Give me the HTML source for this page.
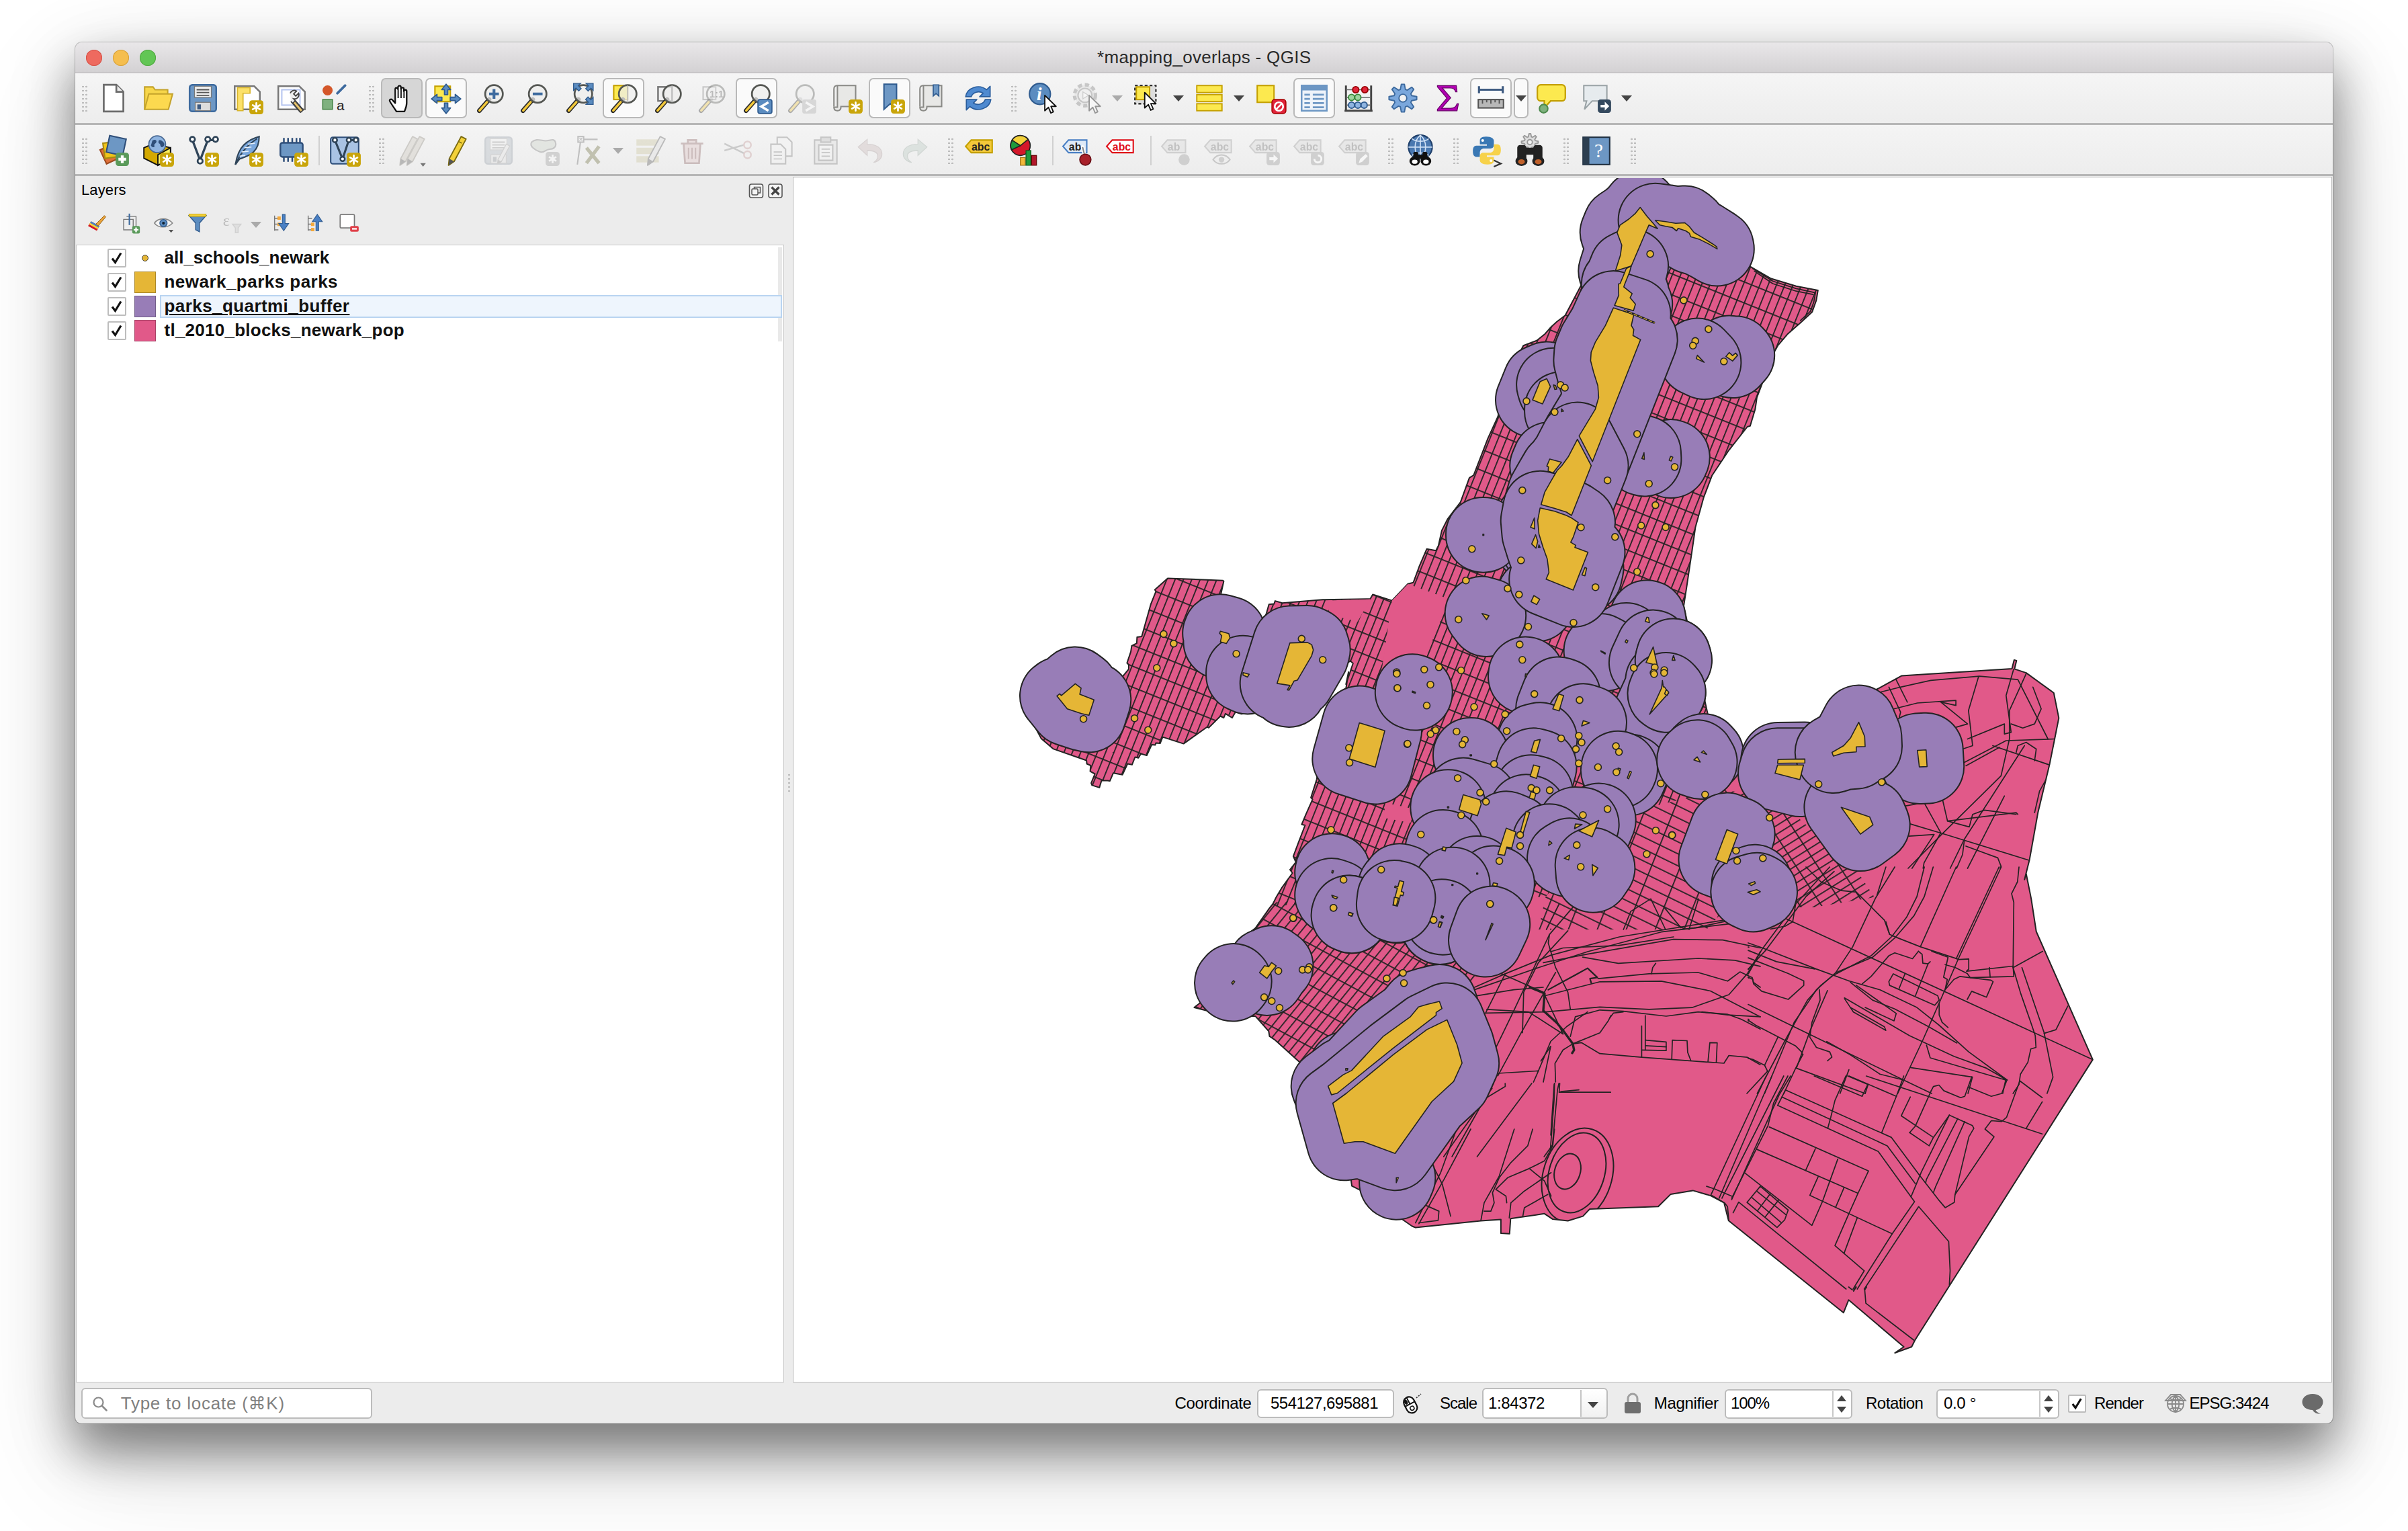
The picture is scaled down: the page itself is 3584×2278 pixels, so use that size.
<!DOCTYPE html><html><head><meta charset="utf-8"><title>mapping_overlaps - QGIS</title><style>
html,body{margin:0;padding:0;background:#fff}
body{width:3584px;height:2278px;position:relative;overflow:hidden;font-family:"Liberation Sans",sans-serif}
#win{position:absolute;left:112px;top:63px;width:3360px;height:2055px;background:#ececec;border-radius:10px 10px 9px 9px;
 box-shadow:0 0 0 1px rgba(0,0,0,.22),0 40px 66px rgba(0,0,0,.33),0 34px 100px rgba(0,0,0,.23),0 60px 170px rgba(0,0,0,.13);}
#in{position:absolute;left:-112px;top:-63px;width:3584px;height:2278px;}
#clip{position:absolute;left:0;top:0;width:3360px;height:2055px;border-radius:10px 10px 9px 9px;overflow:hidden}
.abs{position:absolute}
.t{position:absolute;white-space:nowrap}
.ic{position:absolute;overflow:visible}
.btn{position:absolute;border:2px solid #b9b9b9;border-radius:7px;background:#fafafa;box-sizing:border-box}
.hd{position:absolute;width:10px;height:40px;background-image:radial-gradient(circle,#bdbdbd 1.2px,transparent 1.6px);background-size:5px 6px}
.box{position:absolute;background:#fff;border:2px solid #bcbcbc;border-radius:6px;box-sizing:border-box}
.map{position:absolute;left:1182px;top:265px}
.sep{position:absolute;width:2px;height:44px;background:#d0d0d0}
.arr{position:absolute;width:0;height:0;border-left:8px solid transparent;border-right:8px solid transparent;border-top:9px solid #555}
</style></head><body><div id="win"><div id="clip"><div id="in">
<div class="abs" style="left:112px;top:63px;width:3360px;height:45px;background:linear-gradient(#e9e7e9,#d3d1d3);border-bottom:1px solid #b4b2b4"></div>
<div class="abs" style="left:127.80000000000001px;top:74px;width:24px;height:24px;border-radius:50%;background:#ee6a5f;box-shadow:inset 0 0 0 1px #d5544a"></div>
<div class="abs" style="left:167.9px;top:74px;width:24px;height:24px;border-radius:50%;background:#f5be4f;box-shadow:inset 0 0 0 1px #d6a13d"></div>
<div class="abs" style="left:208px;top:74px;width:24px;height:24px;border-radius:50%;background:#62c655;box-shadow:inset 0 0 0 1px #52a842"></div>
<div class="t" style="left:1633px;top:70.4px;font-size:26px;line-height:31.2px;letter-spacing:0.32px;color:#2a2a2a;">*mapping_overlaps - QGIS</div>
<div class="abs" style="left:112px;top:109px;width:3360px;height:74px;background:linear-gradient(#f5f5f5,#ededed);border-bottom:3px solid #b6b6b6"></div>
<div class="abs" style="left:112px;top:186px;width:3360px;height:73px;background:linear-gradient(#f4f4f4,#ededed);border-bottom:3px solid #b6b6b6"></div>
<div class="hd" style="left:121px;top:126px"></div>
<div class="hd" style="left:548px;top:126px"></div>
<div class="hd" style="left:1504px;top:126px"></div>
<div class="hd" style="left:121px;top:204px"></div>
<div class="hd" style="left:563px;top:204px"></div>
<div class="hd" style="left:1410px;top:204px"></div>
<div class="hd" style="left:2065px;top:204px"></div>
<div class="hd" style="left:2162px;top:204px"></div>
<div class="hd" style="left:2326px;top:204px"></div>
<div class="hd" style="left:2426px;top:204px"></div>
<div class="btn" style="left:567.0px;top:116.0px;width:62px;height:60px;background:#d6d6d6"></div>
<div class="btn" style="left:633.0px;top:116.0px;width:62px;height:60px;background:#fafafa"></div>
<div class="btn" style="left:896.5px;top:116.0px;width:62px;height:60px;background:#fafafa"></div>
<div class="btn" style="left:1094.5px;top:116.0px;width:62px;height:60px;background:#fafafa"></div>
<div class="btn" style="left:1293.0px;top:116.0px;width:62px;height:60px;background:#fafafa"></div>
<div class="btn" style="left:1924.5px;top:116.0px;width:62px;height:60px;background:#fafafa"></div>
<div class="btn" style="left:2188.0px;top:116.0px;width:62px;height:60px;background:#fafafa"></div>
<div class="btn" style="left:2253.0px;top:116.0px;width:22px;height:60px;background:#fafafa"></div>
<svg class="ic" style="left:144px;top:121px" width="50" height="50" viewBox="0 0 24 24"><path d="M5 2.5h9l5 5v14H5z" fill="#fff" stroke="#6b6b6b" stroke-width="1.3"/><path d="M14 2.5v5h5" fill="#eee" stroke="#6b6b6b" stroke-width="1.3"/></svg>
<svg class="ic" style="left:210px;top:121px" width="50" height="50" viewBox="0 0 24 24"><path d="M2.5 20V4h6l1.5 2h9v3" fill="#f7d64a" stroke="#c4a32b" stroke-width="1"/><path d="M2.5 20l3-11h17l-3 11z" fill="#fcd94f" stroke="#c4a32b" stroke-width="1"/></svg>
<svg class="ic" style="left:277px;top:121px" width="50" height="50" viewBox="0 0 24 24"><rect x="2.5" y="2.5" width="19" height="19" rx="2" fill="#6d97c4" stroke="#3d6a9e" stroke-width="1.2"/><rect x="6" y="3.5" width="12" height="8" fill="#eee" stroke="#777" stroke-width=".6"/><path d="M7.5 6h9M7.5 8h9M7.5 10h9" stroke="#555" stroke-width=".9"/><rect x="6.5" y="15" width="11" height="6" fill="#ddd" stroke="#777" stroke-width=".6"/><rect x="8" y="16.5" width="2.6" height="3.5" fill="#3d5a80"/></svg>
<svg class="ic" style="left:343px;top:121px" width="50" height="50" viewBox="0 0 24 24"><path d="M3 3.5h14l4 4V20H3z" fill="#fff" stroke="#777" stroke-width="1.2"/><path d="M5 4.5h9v4h-5v12.5H5z" fill="#fce16a" stroke="#d8b52c" stroke-width=".8"/><rect x="13.5" y="13.5" width="10" height="10" rx="2" fill="#c9a50a"/><g stroke="#fff" stroke-width="1.3" stroke-linecap="round"><path d="M18.5 15.5v6M15.9 17.0l5.2 3M21.1 17.0l-5.2 3"/></g></svg>
<svg class="ic" style="left:408.5px;top:121px" width="50" height="50" viewBox="0 0 24 24"><path d="M2.5 3.5h15l4 4V20h-19z" fill="#fff" stroke="#777" stroke-width="1.2"/><rect x="5" y="6" width="13" height="11" fill="none" stroke="#b7c6f0" stroke-width="1"/><path d="M11 8.5a3 3 0 0 1 4.5-1.5l-2 2 1.5 1.5 2-2a3 3 0 0 1-3.5 4l6.5 7.5-2 1.8-6.5-7.5" fill="#eee" stroke="#444" stroke-width=".9"/><path d="M14.5 14l5.7 6.6-1.7 1.5-5.6-6.6z" fill="#e9c46a" stroke="#444" stroke-width=".8"/></svg>
<svg class="ic" style="left:473px;top:121px" width="50" height="50" viewBox="0 0 24 24"><circle cx="7" cy="6.5" r="3.6" fill="#d4572a"/><rect x="3.5" y="13" width="7" height="7" fill="#7fb17f" stroke="#4e8a4e" stroke-width=".8"/><path d="M14 8.5l5.5-5.5" stroke="#3d6a9e" stroke-width="1.8" stroke-linecap="round"/><text x="13.5" y="20.5" font-family="Liberation Sans,sans-serif" font-size="10" fill="#222">a</text></svg>
<svg class="ic" style="left:573px;top:121px" width="50" height="50" viewBox="0 0 24 24"><path d="M8.2 21.5c-1.3-2-3.6-5.3-4.6-7-.8-1.4.6-2.3 1.7-1.2l2 2.3V5.8c0-1.5 2-1.5 2 0V4.3c0-1.5 2.1-1.5 2.1 0v1.2c0-1.4 2.1-1.4 2.1 0v1.6c0-1.3 2-1.3 2 0v8.4c0 2.4-.8 4-1.6 6z" fill="#fff" stroke="#111" stroke-width="1.1" stroke-linejoin="round"/><path d="M9.4 6v6M11.5 5.5V12M13.6 6.5V12" stroke="#111" stroke-width=".9"/></svg>
<svg class="ic" style="left:639px;top:121px" width="50" height="50" viewBox="0 0 24 24"><rect x="4" y="3.5" width="11" height="11" fill="#fce94f" stroke="#c4a000" stroke-width="1"/><g fill="#5b8cc0" stroke="#2f5b8f" stroke-width=".8" stroke-linejoin="round"><path d="M12 2l3.2 4h-2v3.5h-2.4V6h-2z"/><path d="M12 23l3.2-4h-2v-3.5h-2.4V19h-2z"/><path d="M1.5 12.5l4-3.2v2H9v2.4H5.5v2z"/><path d="M22.5 12.5l-4-3.2v2H15v2.4h3.5v2z"/></g></svg>
<svg class="ic" style="left:704px;top:121px" width="50" height="50" viewBox="0 0 24 24"><g opacity="1"><path d="M4.5 21 L11.5 13" stroke="#2b2b2b" stroke-width="3.2" stroke-linecap="round"/><path d="M4.7 20.8 L10 14.8" stroke="#f3c93a" stroke-width="1.7" stroke-linecap="round"/><circle cx="15" cy="9" r="6.3" fill="#eeeeec" fill-opacity=".75" stroke="#555753" stroke-width="1.3"/><path d="M15 5.5v7M11.5 9h7" stroke="#3d6a9e" stroke-width="2"/></g></svg>
<svg class="ic" style="left:769px;top:121px" width="50" height="50" viewBox="0 0 24 24"><g opacity="1"><path d="M4.5 21 L11.5 13" stroke="#2b2b2b" stroke-width="3.2" stroke-linecap="round"/><path d="M4.7 20.8 L10 14.8" stroke="#f3c93a" stroke-width="1.7" stroke-linecap="round"/><circle cx="15" cy="9" r="6.3" fill="#eeeeec" fill-opacity=".75" stroke="#555753" stroke-width="1.3"/><path d="M11.5 9h7" stroke="#3d6a9e" stroke-width="2"/></g></svg>
<svg class="ic" style="left:837px;top:121px" width="50" height="50" viewBox="0 0 24 24"><g opacity="1"><path d="M4.5 21 L11.5 13" stroke="#2b2b2b" stroke-width="3.2" stroke-linecap="round"/><path d="M4.7 20.8 L10 14.8" stroke="#f3c93a" stroke-width="1.7" stroke-linecap="round"/><circle cx="15" cy="9" r="6.3" fill="#eeeeec" fill-opacity=".75" stroke="#555753" stroke-width="1.3"/></g><g fill="#5b8cc0" stroke="#2f5b8f" stroke-width=".7"><path d="M8 1.5h5l-1.6 1.6 2 2-1.7 1.7-2-2L8 6.5z"/><path d="M22 1.5v5l-1.6-1.6-2 2-1.7-1.7 2-2L17 1.5z"/><path d="M22 16.5h-5l1.6-1.6-2-2 1.7-1.7 2 2 1.7-1.7z"/></g></svg>
<svg class="ic" style="left:902.5px;top:121px" width="50" height="50" viewBox="0 0 24 24"><rect x="5" y="3" width="10" height="10" fill="#fce94f" stroke="#c4a000" stroke-width="1"/><g opacity="1"><path d="M4.5 21 L11.5 13" stroke="#2b2b2b" stroke-width="3.2" stroke-linecap="round"/><path d="M4.7 20.8 L10 14.8" stroke="#f3c93a" stroke-width="1.7" stroke-linecap="round"/><circle cx="15" cy="9" r="6.3" fill="#eeeeec" fill-opacity=".75" stroke="#555753" stroke-width="1.3"/><path d="M15 3v12" stroke="#bbb" stroke-width=".8"/></g></svg>
<svg class="ic" style="left:968.5px;top:121px" width="50" height="50" viewBox="0 0 24 24"><rect x="5" y="4" width="10" height="10" fill="#f0f0f0" stroke="#777" stroke-width="1.2"/><g opacity="1"><path d="M4.5 21 L11.5 13" stroke="#2b2b2b" stroke-width="3.2" stroke-linecap="round"/><path d="M4.7 20.8 L10 14.8" stroke="#f3c93a" stroke-width="1.7" stroke-linecap="round"/><circle cx="15" cy="9" r="6.3" fill="#eeeeec" fill-opacity=".75" stroke="#555753" stroke-width="1.3"/><path d="M15 3v12" stroke="#bbb" stroke-width=".8"/></g></svg>
<svg class="ic" style="left:1034px;top:121px" width="50" height="50" viewBox="0 0 24 24"><g opacity=".35"><rect x="6" y="4" width="9" height="9" fill="#f0f0f0" stroke="#777"/></g><g opacity="0.35"><path d="M4.5 21 L11.5 13" stroke="#2b2b2b" stroke-width="3.2" stroke-linecap="round"/><path d="M4.7 20.8 L10 14.8" stroke="#f3c93a" stroke-width="1.7" stroke-linecap="round"/><circle cx="15" cy="9" r="6.3" fill="#eeeeec" fill-opacity=".75" stroke="#555753" stroke-width="1.3"/><text x="10.6" y="11.5" font-family="Liberation Sans,sans-serif" font-weight="bold" font-size="7" fill="#555">1:1</text></g></svg>
<svg class="ic" style="left:1100.5px;top:121px" width="50" height="50" viewBox="0 0 24 24"><g opacity="1"><path d="M4.5 21 L11.5 13" stroke="#2b2b2b" stroke-width="3.2" stroke-linecap="round"/><path d="M4.7 20.8 L10 14.8" stroke="#f3c93a" stroke-width="1.7" stroke-linecap="round"/><circle cx="15" cy="9" r="6.3" fill="#eeeeec" fill-opacity=".75" stroke="#555753" stroke-width="1.3"/></g><rect x="13" y="13" width="10" height="10" rx="1.5" fill="#5b8cc0" stroke="#2f5b8f" stroke-width=".8"/><path d="M20.5 15l-5 3 5 3" fill="none" stroke="#fff" stroke-width="1.8"/></svg>
<svg class="ic" style="left:1167px;top:121px" width="50" height="50" viewBox="0 0 24 24"><g opacity=".35"><g opacity="1"><path d="M4.5 21 L11.5 13" stroke="#2b2b2b" stroke-width="3.2" stroke-linecap="round"/><path d="M4.7 20.8 L10 14.8" stroke="#f3c93a" stroke-width="1.7" stroke-linecap="round"/><circle cx="15" cy="9" r="6.3" fill="#eeeeec" fill-opacity=".75" stroke="#555753" stroke-width="1.3"/></g><rect x="13" y="13" width="10" height="10" rx="1.5" fill="#aaa"/><path d="M15.5 15l5 3-5 3" fill="none" stroke="#fff" stroke-width="1.8"/></g></svg>
<svg class="ic" style="left:1235.5px;top:121px" width="50" height="50" viewBox="0 0 24 24"><path d="M5 3h13v15H7.5c0 2-1 3-2.5 3s-2.5-1-2.500-2.500h2.500z" fill="#e8e8e6" stroke="#8a8a86" stroke-width="1"/><path d="M5 3c-1.500 0-2.500 1-2.500 2.500V18" fill="none" stroke="#8a8a86"/><rect x="13" y="13" width="10" height="10" rx="2" fill="#c9a50a"/><g stroke="#fff" stroke-width="1.3" stroke-linecap="round"><path d="M18 15v6M15.4 16.5l5.2 3M20.6 16.5l-5.2 3"/></g></svg>
<svg class="ic" style="left:1299px;top:121px" width="50" height="50" viewBox="0 0 24 24"><path d="M8 2h9v18l-4.500-4-4.500 4z" fill="#6d97c4" stroke="#2f5b8f" stroke-width="1"/><rect x="13" y="13" width="10" height="10" rx="2" fill="#c9a50a"/><g stroke="#fff" stroke-width="1.3" stroke-linecap="round"><path d="M18 15v6M15.4 16.5l5.2 3M20.6 16.5l-5.2 3"/></g></svg>
<svg class="ic" style="left:1364px;top:121px" width="50" height="50" viewBox="0 0 24 24"><path d="M5 3h13v15H7.5c0 2-1 3-2.5 3s-2.5-1-2.500-2.500h2.500z" fill="#e8e8e6" stroke="#8a8a86" stroke-width="1"/><path d="M5 3c-1.500 0-2.500 1-2.500 2.500V18" fill="none" stroke="#8a8a86"/><path d="M12 2.5h4v8l-2-1.800-2 1.800z" fill="#6d97c4" stroke="#2f5b8f" stroke-width=".8"/></svg>
<svg class="ic" style="left:1430.7px;top:121px" width="50" height="50" viewBox="0 0 24 24"><g fill="#4f8ad0" stroke="#2a5d9c" stroke-width=".8" stroke-linejoin="round"><path d="M3 11a9 8 0 0 1 15-5l2.500-2.500V11h-7.500l2.500-2.500a5.500 5 0 0 0-8.500 2.500z"/><path d="M21 13a9 8 0 0 1-15 5l-2.500 2.500V13H11l-2.500 2.500a5.500 5 0 0 0 8.500-2.500z"/></g></svg>
<svg class="ic" style="left:1527.7px;top:121px" width="50" height="50" viewBox="0 0 24 24"><circle cx="9.500" cy="9" r="7.500" fill="#5b8cc0" stroke="#2f5b8f"/><text x="7.200" y="13.500" font-family="Liberation Serif,serif" font-style="italic" font-weight="bold" font-size="13" fill="#fff">i</text><path d="M13 10v11l2.600-2.400 1.700 4 1.800-.8-1.700-3.900h3.600z" fill="#fff" stroke="#111" stroke-width=".9" stroke-linejoin="round"/></svg>
<svg class="ic" style="left:1594px;top:121px" width="50" height="50" viewBox="0 0 24 24"><g opacity=".4"><circle cx="10" cy="10" r="7.500" fill="#ddd" stroke="#888" stroke-width="2.500" stroke-dasharray="3 2"/><circle cx="10" cy="10" r="5" fill="#eee" stroke="#888"/><path d="M8.500 7.500v5l4-2.500z" fill="#fff" stroke="#999" stroke-width=".6"/><path d="M13 10v11l2.600-2.400 1.700 4 1.800-.8-1.700-3.900h3.600z" fill="#fff" stroke="#111" stroke-width=".9" stroke-linejoin="round"/></g></svg>
<svg class="ic" style="left:1684.7px;top:121px" width="50" height="50" viewBox="0 0 24 24"><rect x="2" y="3" width="15" height="13" fill="#ddd" stroke="#222" stroke-width="1" stroke-dasharray="2 1.500"/><rect x="3" y="4" width="9.500" height="9" fill="#fce94f" stroke="#c4a000"/><path d="M9 8v11l2.600-2.400 1.700 4 1.800-.8-1.700-3.900h3.600z" fill="#fff" stroke="#111" stroke-width=".9" stroke-linejoin="round"/></svg>
<svg class="ic" style="left:1774.8px;top:121px" width="50" height="50" viewBox="0 0 24 24"><g fill="#fce94f" stroke="#c4a000" stroke-width=".9"><rect x="3" y="3" width="18" height="5"/><rect x="3" y="9.500" width="18" height="5"/><rect x="3" y="16" width="18" height="5"/></g></svg>
<svg class="ic" style="left:1866px;top:121px" width="50" height="50" viewBox="0 0 24 24"><rect x="2.500" y="3" width="12" height="12" fill="#fce94f" stroke="#c4a000"/><rect x="13" y="13" width="10" height="10" rx="2" fill="#e0243a" stroke="#a40000" stroke-width=".7"/><circle cx="18" cy="18" r="3" fill="none" stroke="#fff" stroke-width="1.300"/><path d="M16 20l4-4" stroke="#fff" stroke-width="1.300"/></svg>
<svg class="ic" style="left:1930.5px;top:121px" width="50" height="50" viewBox="0 0 24 24"><rect x="3" y="3" width="18" height="18" fill="#eef3fa" stroke="#6d97c4" stroke-width="1.200"/><rect x="3" y="3" width="18" height="3.500" fill="#6d97c4"/><g stroke="#6d97c4" stroke-width="1.300"><path d="M5 9.500h4M11 9.500h8M5 12.500h4M11 12.500h8M5 15.500h4M11 15.500h8M5 18.500h4M11 18.500h8"/></g></svg>
<svg class="ic" style="left:1997px;top:121px" width="50" height="50" viewBox="0 0 24 24"><path d="M3 3v18M21 3v18M2 21h20" stroke="#444" stroke-width="1.400"/><path d="M3 6h18M3 11.500h18M3 17h18" stroke="#666" stroke-width=".8"/><g stroke-width=".9"><circle cx="10" cy="6" r="2.200" fill="#e0243a" stroke="#900"/><circle cx="16.500" cy="6" r="2.200" fill="#e0243a" stroke="#900"/><circle cx="7" cy="11.500" r="2.200" fill="#9fd39f" stroke="#3c8a3c"/><circle cx="11.500" cy="11.500" r="2.200" fill="#9fd39f" stroke="#3c8a3c"/><circle cx="7" cy="17" r="2.200" fill="#8fb4e0" stroke="#2f5b8f"/><circle cx="11.500" cy="17" r="2.200" fill="#8fb4e0" stroke="#2f5b8f"/><circle cx="16" cy="17" r="2.200" fill="#8fb4e0" stroke="#2f5b8f"/></g></svg>
<svg class="ic" style="left:2062.6px;top:121px" width="50" height="50" viewBox="0 0 24 24"><path d="M21.9 10.9 L21.9 13.1 L18.2 13.8 L17.7 15.1 L19.8 18.3 L18.3 19.8 L15.1 17.7 L13.8 18.2 L13.1 21.9 L10.9 21.9 L10.2 18.2 L8.9 17.7 L5.7 19.8 L4.2 18.3 L6.3 15.1 L5.8 13.8 L2.1 13.1 L2.1 10.9 L5.8 10.2 L6.3 8.9 L4.2 5.7 L5.7 4.2 L8.9 6.3 L10.2 5.8 L10.9 2.1 L13.1 2.1 L13.8 5.8 L15.1 6.3 L18.3 4.2 L19.8 5.7 L17.7 8.9 L18.2 10.2Z" fill="#7aa7dc" stroke="#3d6a9e" stroke-width=".9" stroke-linejoin="round"/><circle cx="12" cy="12" r="2.8" fill="#f2f2f2" stroke="#3d6a9e" stroke-width=".9"/></svg>
<svg class="ic" style="left:2128.6px;top:121px" width="50" height="50" viewBox="0 0 24 24"><path d="M5 3h13.500l.5 4.500h-1c-.5-2-1.500-2.800-4-2.800H8.500l6 7-6.500 7.500h6.500c2.500 0 3.800-1 4.500-3.200h1l-1 5H5v-1l6.800-8L5 4z" fill="#b100b1" stroke="#6a006a" stroke-width=".6"/></svg>
<svg class="ic" style="left:2194px;top:121px" width="50" height="50" viewBox="0 0 24 24"><path d="M3.500 6h17M3.500 3.500v5M20.500 3.500v5" stroke="#3d5a80" stroke-width="1.500"/><rect x="3" y="13" width="18" height="6" fill="#b8b8b8" stroke="#555" stroke-width="1"/><path d="M6 13v3M9 13v2M12 13v3M15 13v2M18 13v3" stroke="#555" stroke-width=".9"/></svg>
<svg class="ic" style="left:2284.7px;top:121px" width="50" height="50" viewBox="0 0 24 24"><path d="M4 2.500h15a2.500 2.500 0 0 1 2.500 2.500v6.500a2.500 2.500 0 0 1-2.500 2.500h-8l-4.500 5v-5H4a2.500 2.500 0 0 1-2.500-2.500V5A2.500 2.500 0 0 1 4 2.500z" fill="#fce94f" stroke="#c4a000" stroke-width="1.100"/><circle cx="6" cy="19.500" r="3" fill="#7fb17f" stroke="#4e8a4e"/></svg>
<svg class="ic" style="left:2350.8px;top:121px" width="50" height="50" viewBox="0 0 24 24"><path d="M3 3h16.500v11H9l-5.500 6 1.500-6H3z" fill="#e6ebee" stroke="#9aa3a6" stroke-width="1"/><rect x="13" y="13" width="9.500" height="9.500" rx="2" fill="#34495e"/><path d="M15 17.800h3v-2.300l3.200 3.200-3.200 3.200v-2.300h-3z" fill="#fff" transform="translate(0 -1)"/></svg>
<div class="arr" style="left:1654.7px;top:142px;border-top-color:#aaa"></div>
<div class="arr" style="left:1746px;top:142px;border-top-color:#444"></div>
<div class="arr" style="left:1836px;top:142px;border-top-color:#444"></div>
<div class="arr" style="left:2256px;top:142px;border-top-color:#444"></div>
<div class="arr" style="left:2412.6px;top:142px;border-top-color:#444"></div>
<svg class="ic" style="left:144px;top:199px" width="50" height="50" viewBox="0 0 24 24"><rect x="4" y="9" width="11" height="11" fill="#e0703a" stroke="#9c4a1f" transform="rotate(-25 9 14)"/><rect x="5" y="6" width="11" height="11" fill="#f0c419" stroke="#a88a10" transform="rotate(-8 10 11)"/><rect x="8" y="2.500" width="12" height="12" fill="#6d97c4" stroke="#2f4f7a" transform="rotate(12 14 8)"/><rect x="13.500" y="13.500" width="9.500" height="9.500" rx="2" fill="#5a9a5a"/><path d="M18.200 15.500v5.500M15.500 18.200h5.500" stroke="#fff" stroke-width="2"/></svg>
<svg class="ic" style="left:210px;top:199px" width="50" height="50" viewBox="0 0 24 24"><path d="M2 10l7-3 12 3v8l-9 4.500-10-5z" fill="#d4a900" stroke="#111" stroke-width=".9" stroke-linejoin="round"/><path d="M12 15l9-5v8l-9 4.500z" fill="#fcf060" stroke="#111" stroke-width=".9"/><circle cx="11.500" cy="7.500" r="6" fill="#8fb4e0" stroke="#4a6a94" stroke-width=".8"/><path d="M8 5c1-1 3-1 3 .5s-2 1.500-1.500 3S8 10 7 8.500zM13 4.500c1.500 0 3 1 3.500 2.500s-1 3-2 2.500-.5-2-1.500-2.500-.5-2.500 0-2.500z" fill="#2f4f7a"/><rect x="13.5" y="13.5" width="10" height="10" rx="2" fill="#c9a50a"/><g stroke="#fff" stroke-width="1.3" stroke-linecap="round"><path d="M18.5 15.5v6M15.9 17.0l5.2 3M21.1 17.0l-5.2 3"/></g></svg>
<svg class="ic" style="left:277px;top:199px" width="50" height="50" viewBox="0 0 24 24"><path d="M4.500 4.500L10 19 15.500 4.500H21" fill="none" stroke="#2f4458" stroke-width="1.600"/><g fill="#fff" stroke="#2f4458" stroke-width="1.300"><circle cx="4.500" cy="4" r="1.800"/><circle cx="15.500" cy="4" r="1.800"/><circle cx="21" cy="4" r="1.800"/><circle cx="10" cy="19.500" r="1.800"/></g><rect x="13.5" y="13.5" width="10" height="10" rx="2" fill="#c9a50a"/><g stroke="#fff" stroke-width="1.3" stroke-linecap="round"><path d="M18.5 15.5v6M15.9 17.0l5.2 3M21.1 17.0l-5.2 3"/></g></svg>
<svg class="ic" style="left:343px;top:199px" width="50" height="50" viewBox="0 0 24 24"><path d="M3.500 22c1-6 3-11 6-14s7-5 11-6c0 4-1 8-4 11s-7 4-10 5z" fill="#7aa7dc" stroke="#2f4458" stroke-width="1"/><path d="M3.500 22C7 14 12 8 19 3.500" fill="none" stroke="#2f4458" stroke-width="1"/><path d="M8 13l5-.5M10 10l5-.5M12.500 7.500l5-.8M6.500 16l4-.5" stroke="#e8f0fa" stroke-width=".8"/><rect x="13.5" y="13.5" width="10" height="10" rx="2" fill="#c9a50a"/><g stroke="#fff" stroke-width="1.3" stroke-linecap="round"><path d="M18.5 15.5v6M15.9 17.0l5.2 3M21.1 17.0l-5.2 3"/></g></svg>
<svg class="ic" style="left:409.5px;top:199px" width="50" height="50" viewBox="0 0 24 24"><rect x="3.500" y="6.500" width="16" height="10" rx="1.500" fill="#6d97c4" stroke="#2f4f7a" stroke-width="1.200"/><path d="M6 3v3.500M9 3v3.500M12 3v3.500M15 3v3.500M17.500 3v3.500M6 16.500V20M9 16.500V20M12 16.500V20M15 16.500V20" stroke="#2f4f7a" stroke-width="1.200"/><rect x="13.5" y="13.5" width="10" height="10" rx="2" fill="#c9a50a"/><g stroke="#fff" stroke-width="1.3" stroke-linecap="round"><path d="M18.5 15.5v6M15.9 17.0l5.2 3M21.1 17.0l-5.2 3"/></g></svg>
<svg class="ic" style="left:488px;top:199px" width="50" height="50" viewBox="0 0 24 24"><rect x="2" y="2.500" width="20" height="19" rx="1.500" fill="#a9c3e4" stroke="#2f4f7a" stroke-width="1"/><path d="M5 4.500L10.500 18 15 4.500H20" fill="none" stroke="#2f4458" stroke-width="1.500"/><g fill="#fff" stroke="#2f4458" stroke-width="1.200"><circle cx="5" cy="4.500" r="1.600"/><circle cx="15" cy="4.500" r="1.600"/><circle cx="20" cy="4.500" r="1.600"/><circle cx="10.500" cy="18" r="1.600"/></g><rect x="13.5" y="13.5" width="10" height="10" rx="2" fill="#c9a50a"/><g stroke="#fff" stroke-width="1.3" stroke-linecap="round"><path d="M18.5 15.5v6M15.9 17.0l5.2 3M21.1 17.0l-5.2 3"/></g></svg>
<svg class="ic" style="left:587.7px;top:199px" width="50" height="50" viewBox="0 0 24 24"><g opacity=".35"><g transform="translate(-4 0)"><path d="M16.500 2l3.500 1.800-8.500 16-4 2.700.5-4.700z" fill="#c9c3b8" stroke="#8a857a" stroke-width=".9" stroke-linejoin="round"/><path d="M8 17.800l3.500 2-4 2.700z" fill="#555"/></g><g transform="translate(1 0)"><path d="M16.500 2l3.500 1.800-8.500 16-4 2.700.5-4.700z" fill="#c9c3b8" stroke="#8a857a" stroke-width=".9" stroke-linejoin="round"/><path d="M8 17.800l3.500 2-4 2.700z" fill="#555"/></g></g><path d="M18 21h4l-2 2.500z" fill="#777"/></svg>
<svg class="ic" style="left:652px;top:199px" width="50" height="50" viewBox="0 0 24 24"><g transform="translate(0 0)"><path d="M16.500 2l3.500 1.800-8.500 16-4 2.700.5-4.700z" fill="#f3d13a" stroke="#7a6a10" stroke-width=".9" stroke-linejoin="round"/><path d="M8 17.800l3.500 2-4 2.700z" fill="#555"/></g><path d="M14.500 5.500l2.500 1.300" stroke="#7a6a10" stroke-width=".7"/></svg>
<svg class="ic" style="left:717px;top:199px" width="50" height="50" viewBox="0 0 24 24"><g opacity=".22" style="filter:grayscale(.7)"><rect x="2.5" y="2.5" width="19" height="19" rx="2" fill="#6d97c4" stroke="#3d6a9e" stroke-width="1.2"/><rect x="6" y="3.5" width="12" height="8" fill="#eee" stroke="#777" stroke-width=".6"/><path d="M7.5 6h9M7.5 8h9M7.5 10h9" stroke="#555" stroke-width=".9"/><rect x="6.5" y="15" width="11" height="6" fill="#ddd" stroke="#777" stroke-width=".6"/><rect x="8" y="16.5" width="2.6" height="3.5" fill="#3d5a80"/><g transform="translate(6 6) scale(.7)"><path d="M16.500 2l3.500 1.800-8.500 16-4 2.700.5-4.700z" fill="#ddd" stroke="#666" stroke-width=".9" stroke-linejoin="round"/><path d="M8 17.800l3.500 2-4 2.700z" fill="#555"/></g></g></svg>
<svg class="ic" style="left:785px;top:199px" width="50" height="50" viewBox="0 0 24 24"><g opacity=".35"><path d="M3 6c3-3 7-1 10-1s6-2 7 1-1 5-4 5-4 3-7 2-8-4-6-7z" fill="#c9cfc4" stroke="#777"/><rect x="13" y="13" width="10" height="10" rx="2" fill="#999"/><g stroke="#fff" stroke-width="1.300"><path d="M18 15v6M15.400 16.500l5.200 3M20.600 16.500l-5.200 3"/></g></g></svg>
<svg class="ic" style="left:852px;top:199px" width="50" height="50" viewBox="0 0 24 24"><g opacity=".35"><path d="M6 4h12M6 4L3.500 22" stroke="#666" stroke-width="1"/><rect x="4" y="2" width="4" height="4" fill="#fff" stroke="#666"/><path d="M5 3l2 2M7 3L5 5" stroke="#666" stroke-width=".6"/><path d="M10 10l9 11M19 9l-9 12" stroke="#6b6b3a" stroke-width="2.500"/></g></svg>
<svg class="ic" style="left:942px;top:199px" width="50" height="50" viewBox="0 0 24 24"><g opacity=".35"><rect x="2.500" y="4" width="16" height="4.500" fill="#c9c39a"/><rect x="2.500" y="10" width="16" height="4.500" fill="#c9c39a"/><rect x="2.500" y="16" width="16" height="4.500" fill="#c9c39a"/><g transform="translate(3 0)"><path d="M16.500 2l3.500 1.800-8.500 16-4 2.700.5-4.700z" fill="#ddd" stroke="#555" stroke-width=".9" stroke-linejoin="round"/><path d="M8 17.800l3.500 2-4 2.700z" fill="#555"/></g></g></svg>
<svg class="ic" style="left:1005px;top:199px" width="50" height="50" viewBox="0 0 24 24"><g opacity=".3"><path d="M4 7h16M9 7V4.500h6V7M6 7l1 14h10l1-14" fill="#d9b8b8" stroke="#7a4a4a" stroke-width="1.300"/><path d="M9.500 10v8M12 10v8M14.500 10v8" stroke="#7a4a4a"/></g></svg>
<svg class="ic" style="left:1073.5px;top:199px" width="50" height="50" viewBox="0 0 24 24"><g opacity=".3" fill="none" stroke="#777" stroke-width="1.200"><path d="M2 7l14 7M2 12l14-4"/><circle cx="18.500" cy="8" r="2.500" stroke="#b88"/><circle cx="18.500" cy="15" r="2.500" stroke="#b88"/></g></svg>
<svg class="ic" style="left:1138px;top:199px" width="50" height="50" viewBox="0 0 24 24"><g opacity=".35" fill="#f4f4f4" stroke="#777" stroke-width="1"><path d="M9 2.500h7l3.500 3.500v10H9z"/><path d="M4.500 7.500h7l3.500 3.500v10.500H4.500z"/><path d="M6.500 13h6M6.500 15.500h6M6.500 18h6" stroke-width=".8"/></g></svg>
<svg class="ic" style="left:1204px;top:199px" width="50" height="50" viewBox="0 0 24 24"><g opacity=".35" fill="#f4f4f4" stroke="#777" stroke-width="1"><path d="M4 4.500h16v17H4z" fill="#ddd"/><rect x="8.500" y="2.500" width="7" height="3.500" fill="#bbb"/><path d="M7 8h10v11H7z"/><path d="M9 11h6M9 13.500h6M9 16h6" stroke-width=".8"/></g></svg>
<svg class="ic" style="left:1271px;top:199px" width="50" height="50" viewBox="0 0 24 24"><g opacity=".35"><path d="M3 9.500l6.500-5.500v3.500c7 0 10.500 3 10.500 7 0 3-2.500 5.500-6 6 2-1 3-2.500 3-4.500 0-2.500-2.500-4-7.500-4v3.500z" fill="#c9b8b8" stroke="#a89a9a" stroke-width=".6"/></g></svg>
<svg class="ic" style="left:1336.4px;top:199px" width="50" height="50" viewBox="0 0 24 24"><g opacity=".35" transform="translate(24 0) scale(-1 1)"><path d="M3 9.500l6.500-5.500v3.500c7 0 10.500 3 10.500 7 0 3-2.500 5.500-6 6 2-1 3-2.500 3-4.500 0-2.500-2.500-4-7.500-4v3.500z" fill="#b8c9c0" stroke="#9aa8a0" stroke-width=".6"/></g></svg>
<svg class="ic" style="left:1432px;top:199px" width="50" height="50" viewBox="0 0 24 24"><g opacity="1"><path d="M2.5 9 L6.5 4.5 H21.5 V13.5 H6.5 Z" fill="#f3c93a" stroke="#c4a000" stroke-width="1"/><text x="6.7" y="12" font-family="Liberation Sans,sans-serif" font-weight="bold" font-size="7.6" fill="#222">abc</text></g></svg>
<svg class="ic" style="left:1500px;top:199px" width="50" height="50" viewBox="0 0 24 24"><circle cx="9" cy="8.500" r="7" fill="#d4172a" stroke="#222" stroke-width=".8"/><path d="M9 8.500V1.500a7 7 0 0 0-6.300 10z" fill="#1f9a3c" stroke="#222" stroke-width=".8"/><path d="M9 8.500L3 4.500A7 7 0 0 1 14.500 4z" fill="#f3d13a" stroke="#222" stroke-width=".8"/><rect x="9" y="17" width="3.500" height="5.500" fill="#f3b93a" stroke="#a07010" stroke-width=".6"/><rect x="13" y="12" width="3.500" height="10.500" fill="#1f9a3c" stroke="#0f5a1c" stroke-width=".6"/><rect x="17" y="15.500" width="3.500" height="7" fill="#b0172a" stroke="#600" stroke-width=".6"/></svg>
<svg class="ic" style="left:1579.6px;top:199px" width="50" height="50" viewBox="0 0 24 24"><g opacity="1"><path d="M1 9 L5 4.5 H18 V13.5 H5 Z" fill="#dfeaf7" stroke="#4a80c4" stroke-width="1"/><text x="5.2" y="12" font-family="Liberation Sans,sans-serif" font-weight="bold" font-size="7.6" fill="#222">ab</text></g><path d="M15 9.500l1.500 6" stroke="#fff" stroke-width="2.500" stroke-linecap="round"/><path d="M15 9.500l1.500 6" stroke="#888" stroke-width="1" /><circle cx="17" cy="18.500" r="4" fill="#a8202a" stroke="#6a1018" stroke-width=".8"/></svg>
<svg class="ic" style="left:1644px;top:199px" width="50" height="50" viewBox="0 0 24 24"><g opacity="1"><path d="M1.5 9 L5.5 4.5 H20.5 V13.5 H5.5 Z" fill="#fff" stroke="#e0101a" stroke-width="1"/><text x="5.7" y="12" font-family="Liberation Sans,sans-serif" font-weight="bold" font-size="7.6" fill="#e0101a">abc</text></g></svg>
<svg class="ic" style="left:1727px;top:199px" width="50" height="50" viewBox="0 0 24 24"><g opacity=".45"><g opacity="1"><path d="M1 9 L5 4.5 H18 V13.5 H5 Z" fill="#ddd" stroke="#aaa" stroke-width="1"/><text x="5.2" y="12" font-family="Liberation Sans,sans-serif" font-weight="bold" font-size="7.6" fill="#888">ab</text></g><circle cx="17" cy="18.500" r="4" fill="#aaa"/></g></svg>
<svg class="ic" style="left:1791px;top:199px" width="50" height="50" viewBox="0 0 24 24"><g opacity=".45"><g opacity="1"><path d="M1 9 L5 4.5 H20 V13.5 H5 Z" fill="#ddd" stroke="#aaa" stroke-width="1"/><text x="5.2" y="12" font-family="Liberation Sans,sans-serif" font-weight="bold" font-size="7.6" fill="#888">abc</text></g><path d="M7 18.500c3-4.500 9-4.500 12 0-3 4-9 4-12 0z" fill="#eee" stroke="#999"/><circle cx="13" cy="18.500" r="2" fill="#aaa"/></g></svg>
<svg class="ic" style="left:1858px;top:199px" width="50" height="50" viewBox="0 0 24 24"><g opacity=".45"><g opacity="1"><path d="M1 9 L5 4.5 H20 V13.5 H5 Z" fill="#ddd" stroke="#aaa" stroke-width="1"/><text x="5.2" y="12" font-family="Liberation Sans,sans-serif" font-weight="bold" font-size="7.6" fill="#888">abc</text></g><rect x="13" y="13" width="9.500" height="9.500" rx="2" fill="#aaa"/><path d="M15 16.800h3v-2l3.200 3-3.200 3v-2h-3z" fill="#fff"/></g></svg>
<svg class="ic" style="left:1924px;top:199px" width="50" height="50" viewBox="0 0 24 24"><g opacity=".45"><g opacity="1"><path d="M1 9 L5 4.5 H20 V13.5 H5 Z" fill="#ddd" stroke="#aaa" stroke-width="1"/><text x="5.2" y="12" font-family="Liberation Sans,sans-serif" font-weight="bold" font-size="7.6" fill="#888">abc</text></g><rect x="13" y="13" width="9.500" height="9.500" rx="2" fill="#aaa"/><path d="M15.500 18a2.500 2.500 0 1 0 2.500-2.500" fill="none" stroke="#fff" stroke-width="1.400"/></g></svg>
<svg class="ic" style="left:1990.7px;top:199px" width="50" height="50" viewBox="0 0 24 24"><g opacity=".45"><g opacity="1"><path d="M1 9 L5 4.5 H20 V13.5 H5 Z" fill="#ddd" stroke="#aaa" stroke-width="1"/><text x="5.2" y="12" font-family="Liberation Sans,sans-serif" font-weight="bold" font-size="7.6" fill="#888">abc</text></g><rect x="13" y="13" width="9.500" height="9.500" rx="2" fill="#aaa"/><path d="M15 21l1-3 4-3.500 1.500 1.500-4 4z" fill="#fff"/></g></svg>
<svg class="ic" style="left:2089px;top:199px" width="50" height="50" viewBox="0 0 24 24"><circle cx="12" cy="9.500" r="8.500" fill="#4a78b0" stroke="#1f3f6a"/><path d="M3.500 9.500h17M12 1v17M6 3.500c3 2.500 9 2.500 12 0M6 15.500c3-2.500 9-2.500 12 0M12 1c-5 4-5 13 0 17M12 1c5 4 5 13 0 17" fill="none" stroke="#cfe0f5" stroke-width=".8"/><g fill="#111"><ellipse cx="8" cy="19.500" rx="3.800" ry="3.300"/><ellipse cx="16" cy="19.500" rx="3.800" ry="3.300"/><rect x="7" y="13" width="3.500" height="6" rx="1"/><rect x="13.500" y="13" width="3.500" height="6" rx="1"/><rect x="10" y="15" width="4" height="3"/></g><ellipse cx="8" cy="20" rx="2" ry="1.500" fill="#fff"/><ellipse cx="16" cy="20" rx="2" ry="1.500" fill="#fff"/></svg>
<svg class="ic" style="left:2188px;top:199px" width="50" height="50" viewBox="0 0 24 24"><path d="M11.500 2c-4 0-4.500 1.500-4.500 3v2.500h5v1H4.500C2.500 8.500 2 10.500 2 12.500s.5 4 2.500 4H7v-3c0-1.800 1.200-3 3-3h4.500c1.500 0 2.500-1 2.500-2.500V5c0-1.500-1.500-3-5.500-3z" fill="#3a78b4"/><circle cx="9" cy="4.800" r="1" fill="#fff"/><path d="M12.500 22c4 0 4.500-1.500 4.500-3v-2.500h-5v-1h7.500c2 0 2.500-2 2.500-4s-.5-4-2.500-4H17v3c0 1.800-1.200 3-3 3H9.500C8 13.500 7 14.500 7 16v3c0 1.500 1.500 3 5.500 3z" fill="#f7d24a"/><circle cx="15" cy="19.200" r="1" fill="#fff"/><path d="M17 19l5 2.300-5 2.200" fill="none" stroke="#333" stroke-width="1.100"/></svg>
<svg class="ic" style="left:2252px;top:199px" width="50" height="50" viewBox="0 0 24 24"><path d="M18.0 5.4 L18.0 6.6 L15.8 7.1 L15.5 7.9 L16.7 9.8 L15.8 10.7 L13.9 9.5 L13.1 9.8 L12.6 12.0 L11.4 12.0 L10.9 9.8 L10.1 9.5 L8.2 10.7 L7.3 9.8 L8.5 7.9 L8.2 7.1 L6.0 6.6 L6.0 5.4 L8.2 4.9 L8.5 4.1 L7.3 2.2 L8.2 1.3 L10.1 2.5 L10.9 2.2 L11.4 0.0 L12.6 0.0 L13.1 2.2 L13.9 2.5 L15.8 1.3 L16.7 2.2 L15.5 4.1 L15.8 4.9Z" fill="#ddd" stroke="#999" stroke-width=".9" stroke-linejoin="round"/><circle cx="12" cy="6" r="1.8" fill="#f2f2f2" stroke="#999" stroke-width=".9"/><g fill="#222"><rect x="3" y="8" width="6.500" height="11" rx="2"/><rect x="14.500" y="8" width="6.500" height="11" rx="2"/><rect x="9" y="10" width="6" height="5"/><ellipse cx="6" cy="19.500" rx="4.300" ry="3.500"/><ellipse cx="18" cy="19.500" rx="4.300" ry="3.500"/></g><ellipse cx="6" cy="20" rx="2.400" ry="1.800" fill="#c0602a"/><ellipse cx="18" cy="20" rx="2.400" ry="1.800" fill="#c0602a"/></svg>
<svg class="ic" style="left:2350.8px;top:199px" width="50" height="50" viewBox="0 0 24 24"><rect x="2.500" y="2.500" width="19" height="19.500" fill="#6d97c4" stroke="#1f2f40" stroke-width="1"/><rect x="2.500" y="2.500" width="4.500" height="19.500" fill="#2c3e50"/><text x="10.500" y="17" font-family="Liberation Serif,serif" font-size="14" fill="#fff">?</text></svg>
<div class="arr" style="left:912px;top:220px;border-top-color:#aaa"></div>
<div class="sep" style="left:474px;top:202px"></div>
<div class="sep" style="left:1566px;top:202px"></div>
<div class="sep" style="left:1712px;top:202px"></div>
<div class="t" style="left:121px;top:269.8px;font-size:22px;line-height:26.4px;letter-spacing:0.11px;color:#000;">Layers</div>
<svg class="ic" style="left:1114px;top:272px" width="52" height="24" viewBox="0 0 52 24"><rect x="1.500" y="2" width="20" height="20" rx="3" fill="#f4f4f4" stroke="#555" stroke-width="1.600"/><rect x="5" y="9" width="9" height="9" rx="1.500" fill="none" stroke="#555" stroke-width="1.500"/><path d="M8.500 9V6.500h9V15H14" fill="none" stroke="#555" stroke-width="1.500"/><rect x="30" y="2" width="20" height="20" rx="3" fill="#f4f4f4" stroke="#555" stroke-width="1.600"/><path d="M34.500 6.500l11 11M45.500 6.500l-11 11" stroke="#444" stroke-width="3.200"/></svg>
<svg class="ic" style="left:127px;top:315px" width="34" height="34" viewBox="0 0 24 24"><path d="M3 15l9 5 3-5-9-5z" fill="#e0703a"/><path d="M3 15l9 5 1-1.700-9-5z" fill="#d4172a"/><path d="M4 13.300l9 5 1-1.700-9-5z" fill="#f3d13a"/><path d="M5 11.600l9 5 1-1.600-9-5z" fill="#4a80c4"/><path d="M11 13l9-9 1.500 1.500-8 9.500z" fill="#e9a23a" stroke="#8a5a10" stroke-width=".6"/></svg>
<svg class="ic" style="left:177px;top:315px" width="34" height="34" viewBox="0 0 24 24"><path d="M5 8h10v11H5z" fill="#eee" stroke="#777"/><path d="M8 5h10v11" fill="none" stroke="#777"/><path d="M11 2v12" stroke="#3d6a9e" stroke-width="1.500"/><rect x="14" y="15" width="8" height="8" rx="1.500" fill="#5a9a5a"/><path d="M18 16.500v5M15.500 19h5" stroke="#fff" stroke-width="1.600"/></svg>
<svg class="ic" style="left:227px;top:315px" width="34" height="34" viewBox="0 0 24 24"><path d="M2 12c4-6 14-6 19 0-5 5.500-15 5.500-19 0z" fill="#f4f4f4" stroke="#888" stroke-width="1.100"/><circle cx="11.500" cy="12" r="3.800" fill="#5b8cc0" stroke="#2f5b8f"/><circle cx="11.500" cy="12" r="1.500" fill="#123"/><path d="M17 19h5l-2.500 3z" fill="#555"/></svg>
<svg class="ic" style="left:277px;top:315px" width="34" height="34" viewBox="0 0 24 24"><path d="M3 4h18l-7 8v9l-4-2v-7z" fill="#5b8cc0" stroke="#2f5b8f" stroke-width="1"/><rect x="3" y="2.500" width="18" height="2.500" fill="#f3d13a" stroke="#c4a000" stroke-width=".6"/></svg>
<svg class="ic" style="left:329px;top:315px" width="34" height="34" viewBox="0 0 24 24"><g opacity=".4"><text x="2" y="15" font-family="Liberation Serif,serif" font-size="17" fill="#777">ε</text><path d="M12 13h9l-3 4v5h-3v-5z" fill="#ccc" stroke="#aaa"/></g></svg>
<svg class="ic" style="left:403px;top:315px" width="34" height="34" viewBox="0 0 24 24"><path d="M4 4v16M4 7h4M4 13h4M4 19h4" stroke="#777" stroke-width="1"/><rect x="7" y="5" width="3.500" height="3.500" fill="#f3a83a"/><rect x="7" y="11.500" width="3.500" height="3.500" fill="#f3a83a"/><path d="M16 3v10h-4l5.500 8 5.500-8h-4V3z" fill="#4a80c4" stroke="#2f5b8f" stroke-width=".8" transform="translate(-3 0) scale(.95)"/></svg>
<svg class="ic" style="left:453px;top:315px" width="34" height="34" viewBox="0 0 24 24"><path d="M4 4v16M4 7h4M4 13h4M4 19h4" stroke="#777" stroke-width="1"/><rect x="7" y="11.500" width="3.500" height="3.500" fill="#f3a83a"/><rect x="7" y="17" width="3.500" height="3.500" fill="#f3a83a"/><path d="M16 21V11h-4l5.500-8 5.500 8h-4v10z" fill="#4a80c4" stroke="#2f5b8f" stroke-width=".8" transform="translate(-3 0) scale(.95)"/></svg>
<svg class="ic" style="left:502px;top:315px" width="34" height="34" viewBox="0 0 24 24"><rect x="3" y="3" width="15" height="14" rx="1" fill="#fff" stroke="#777" stroke-width="1.200"/><rect x="13.500" y="15" width="9" height="6" rx="1.500" fill="#e0404a"/><path d="M15.500 18h5" stroke="#fff" stroke-width="1.600"/></svg>
<div class="arr" style="left:373px;top:330px;border-top-color:#aaa"></div>
<div class="abs" style="left:113px;top:364px;width:1054px;height:1693px;background:#fff;border:1px solid #c6c6c6;box-sizing:border-box"></div>
<div class="abs" style="left:1158px;top:368px;width:6px;height:140px;background:#e9e9e9"></div>
<div class="abs" style="left:238px;top:439px;width:926px;height:34px;background:#eef5fd;border:2px solid #b9d4f1;box-sizing:border-box"></div>
<div class="abs" style="left:160px;top:369.6px;width:28px;height:28px;background:#fff;border:2px solid #bdbdbd;box-sizing:border-box;border-radius:2px"></div>
<svg class="ic" style="left:160px;top:369.6px" width="28" height="28" viewBox="0 0 28 28"><path d="M7 14.500l4.500 6L20 6.500" fill="none" stroke="#111" stroke-width="3.200"/></svg>
<div class="abs" style="left:211px;top:378.6px;width:10px;height:10px;border-radius:50%;background:#e5b636;border:1.500px solid #444;box-sizing:border-box"></div>
<div class="t" style="left:244.5px;top:368px;font-size:26px;line-height:31.2px;letter-spacing:0.00px;color:#111;font-weight:bold;">all_schools_newark</div>
<div class="abs" style="left:160px;top:405.6px;width:28px;height:28px;background:#fff;border:2px solid #bdbdbd;box-sizing:border-box;border-radius:2px"></div>
<svg class="ic" style="left:160px;top:405.6px" width="28" height="28" viewBox="0 0 28 28"><path d="M7 14.500l4.500 6L20 6.500" fill="none" stroke="#111" stroke-width="3.200"/></svg>
<div class="abs" style="left:200px;top:403.6px;width:32px;height:32px;background:#e5b636;box-shadow:inset 0 0 0 1px rgba(0,0,0,.25)"></div>
<div class="t" style="left:244.5px;top:404px;font-size:26px;line-height:31.2px;letter-spacing:0.47px;color:#111;font-weight:bold;">newark_parks parks</div>
<div class="abs" style="left:160px;top:441.8px;width:28px;height:28px;background:#fff;border:2px solid #bdbdbd;box-sizing:border-box;border-radius:2px"></div>
<svg class="ic" style="left:160px;top:441.8px" width="28" height="28" viewBox="0 0 28 28"><path d="M7 14.500l4.500 6L20 6.500" fill="none" stroke="#111" stroke-width="3.200"/></svg>
<div class="abs" style="left:200px;top:439.8px;width:32px;height:32px;background:#987db7;box-shadow:inset 0 0 0 1px rgba(0,0,0,.25)"></div>
<div class="t" style="left:244.5px;top:440.2px;font-size:26px;line-height:31.2px;letter-spacing:0.43px;color:#111;font-weight:bold;text-decoration:underline;text-decoration-thickness:2px;text-underline-offset:3px;">parks_quartmi_buffer</div>
<div class="abs" style="left:160px;top:477.7px;width:28px;height:28px;background:#fff;border:2px solid #bdbdbd;box-sizing:border-box;border-radius:2px"></div>
<svg class="ic" style="left:160px;top:477.7px" width="28" height="28" viewBox="0 0 28 28"><path d="M7 14.500l4.500 6L20 6.500" fill="none" stroke="#111" stroke-width="3.200"/></svg>
<div class="abs" style="left:200px;top:475.7px;width:32px;height:32px;background:#e15989;box-shadow:inset 0 0 0 1px rgba(0,0,0,.25)"></div>
<div class="t" style="left:244.5px;top:476.1px;font-size:26px;line-height:31.2px;letter-spacing:0.25px;color:#111;font-weight:bold;">tl_2010_blocks_newark_pop</div>
<div class="hd" style="left:1172px;top:1150px;width:5px;height:32px"></div>
<div class="abs" style="left:1180px;top:263px;width:2291px;height:1794px;background:#fff;border:1px solid #b9b9b9;box-sizing:border-box;overflow:hidden"></div>
<svg class="map" viewBox="1182 265 2288 1791" width="2288" height="1791">
<defs>
<clipPath id="cpk"><path d="M2449.2 289.9 L2603.7 395.8 L2636.1 414.5 L2673.4 425.7 L2705.8 431.9 L2703.3 446.9 L2697.1 464.3 L2680.9 479.3 L2661 496.7 L2646 514.2 L2638.5 527.9 L2621.1 575.2 L2614.9 591.4 L2612.4 608.8 L2604.9 633.8 L2600.7 635 L2573.3 669.8 L2548.3 707.2 L2535.9 739.6 L2523.4 784.5 L2518.4 819.3 L2511 869.2 L2506 901.6 L2542.3 1064.7 L2567.2 1109.5 L2594.6 1134.4 L2654.4 1109.5 L2716.7 1079.6 L2792.7 1026 L2830.1 1005.6 L2994.5 994.9 L2997.8 981.9 L3001.3 982.9 L2998.3 995.4 L3015.7 1001.1 L3056.8 1031 L3064.3 1068.4 L3058.1 1099.5 L3050.6 1136.9 L3033.2 1209.2 L3020.7 1278.9 L3013.2 1308.8 L3015.7 1300 L3023.2 1337.4 L3030.7 1386 L3114.8 1576.6 L2850.2 1994 L2845.2 2004 L2820.3 2013 L2833.6 2004 L2751.5 1934.2 L2743.9 1953.2 L2572.8 1816.3 L2566.1 1789.7 L2546.2 1779.1 L2519.6 1771.4 L2486.4 1777.1 L2468.1 1795.3 L2366 1799.1 L2356 1809.6 L2333.6 1816.5 L2311.1 1814.1 L2298.7 1805.8 L2256.3 1812.1 L2248.3 1813.3 L2246.8 1835.7 L2233.9 1835 L2233.9 1814.6 L2204 1816.5 L2106.8 1826.5 L2101.8 1824.5 L2085.6 1813.3 L2024.6 1770.9 L2012.1 1764.7 L2010.9 1756 L1974.3 1708.8 L1961.8 1663.9 L1949.3 1614.1 L1934.4 1580.5 L1897 1546.8 L1889.5 1541.8 L1888.3 1534.4 L1868.4 1511.9 L1859.6 1511.9 L1824.8 1511.9 L1796.1 1503.7 L1777.4 1499 L1789.9 1489.5 L1824.8 1414.8 L1868.4 1381.1 L1889.5 1351.2 L1894.5 1345 L1900 1333.9 L1907.5 1321.4 L1923.7 1299 L1919.9 1294 L1928.7 1282.8 L1924.9 1274.1 L1932.4 1254.2 L1942.4 1228 L1937.4 1226.7 L1943.6 1211.8 L1953.6 1189.4 L1951.1 1186.9 L1959.8 1159.5 L1964.8 1124.6 L1982.2 1062.3 L2003.4 1023.7 L2007.1 1000 L2003.3 1018.2 L2013.8 987 L2009.6 983.3 L1973.4 1014.4 L1923.6 1051.8 L1873.8 1059.3 L1847.6 1062.3 L1838.9 1059.3 L1833.9 1068 L1823.9 1061.8 L1821.4 1068 L1816.4 1065.5 L1799 1082.9 L1796.5 1081.7 L1761.6 1106.6 L1730.5 1096.6 L1726.7 1106.1 L1720.5 1105.4 L1719.3 1108.6 L1714.3 1107.9 L1706.8 1124.1 L1698.1 1121.6 L1694.4 1127.8 L1689.4 1126.5 L1684.9 1137.8 L1678.2 1136.5 L1670.7 1152.7 L1657 1150.2 L1652 1161.9 L1648.3 1161.4 L1639.5 1161.4 L1636.3 1171.9 L1625.3 1168.4 L1624.1 1165.2 L1629.6 1151.5 L1622.6 1147.7 L1623.3 1139 L1617.6 1136.5 L1617.1 1131.5 L1567.3 1114.1 L1549.8 1099.1 L1541.1 1082.9 L1574.8 1039.3 L1649.5 1014.4 L1670.7 1006.9 L1679.9 995.7 L1679.9 989 L1677.4 986.5 L1683.1 969.6 L1684.4 960.8 L1691.9 957.1 L1692.4 947.9 L1699.3 947.1 L1713 898.6 L1720.5 879.9 L1718.8 877.4 L1738 860.4 L1820.2 863.7 L1821.4 864.9 L1816.4 887.3 L1848.8 927.2 L1881.2 922.2 L1885 912.3 L1888.7 899.3 L1896.2 898.6 L1897.9 894.1 L1908.6 897.3 L1968.4 892.3 L2039.5 891.1 L2043.2 884.4 L2071.8 893.6 L2095.5 868.7 L2103.6 866.7 L2112.3 843 L2123.5 816.8 L2137.2 819.3 L2140.9 811.9 L2145.9 789.4 L2154.7 772 L2173.8 747.1 L2187 710.9 L2193.3 707.2 L2214.5 652.4 L2229.4 620 L2232.4 608.8 L2257.3 534.1 L2267.3 514.2 L2287.2 506.7 L2299.7 496.7 L2308.4 486.7 L2317.1 478.8 L2329.6 469.3 L2374.4 384.6Z"/></clipPath>
<clipPath id="ra"><polygon points="1480,800 2200,255 2800,255 2800,1000 2560,1060 2560,1175 2400,1215 2300,1335 2080,1330 1885,1350 1885,1100 1480,1220"/></clipPath>
<clipPath id="rb"><polygon points="1860,1345 2080,1330 2270,1335 2200,1440 2150,1610 1940,1610 1770,1500"/></clipPath>
<clipPath id="rc"><polygon points="2560,1175 2640,1185 2760,1290 2790,1335 2700,1350 2570,1350 2560,1300"/></clipPath>
<clipPath id="rd"><polygon points="2400,1215 2560,1175 2560,1300 2570,1350 2540,1383 2290,1383 2300,1335"/></clipPath>
<pattern id="a1" width="11.5" height="40" patternUnits="userSpaceOnUse" patternTransform="rotate(21.9)"><rect x="0" y="0" width="1.8" height="40" fill="#232323"/></pattern>
<pattern id="a2" width="29" height="40" patternUnits="userSpaceOnUse" patternTransform="rotate(111.9)"><rect x="0" y="0" width="1.8" height="40" fill="#232323"/></pattern>
<pattern id="b1" width="11" height="40" patternUnits="userSpaceOnUse" patternTransform="rotate(39)"><rect x="0" y="0" width="1.8" height="40" fill="#232323"/></pattern>
<pattern id="b2" width="27" height="40" patternUnits="userSpaceOnUse" patternTransform="rotate(118)"><rect x="0" y="0" width="1.8" height="40" fill="#232323"/></pattern>
<pattern id="c1" width="11" height="40" patternUnits="userSpaceOnUse" patternTransform="rotate(58)"><rect x="0" y="0" width="1.8" height="40" fill="#232323"/></pattern>
<pattern id="c2" width="27" height="40" patternUnits="userSpaceOnUse" patternTransform="rotate(-33)"><rect x="0" y="0" width="1.8" height="40" fill="#232323"/></pattern>
<pattern id="d1" width="16" height="40" patternUnits="userSpaceOnUse" patternTransform="rotate(-64)"><rect x="0" y="0" width="1.8" height="40" fill="#232323"/></pattern>
<pattern id="d2" width="40" height="40" patternUnits="userSpaceOnUse" patternTransform="rotate(21.8)"><rect x="0" y="0" width="1.8" height="40" fill="#232323"/></pattern>
</defs>
<path d="M2449.2 289.9 L2603.7 395.8 L2636.1 414.5 L2673.4 425.7 L2705.8 431.9 L2703.3 446.9 L2697.1 464.3 L2680.9 479.3 L2661 496.7 L2646 514.2 L2638.5 527.9 L2621.1 575.2 L2614.9 591.4 L2612.4 608.8 L2604.9 633.8 L2600.7 635 L2573.3 669.8 L2548.3 707.2 L2535.9 739.6 L2523.4 784.5 L2518.4 819.3 L2511 869.2 L2506 901.6 L2542.3 1064.7 L2567.2 1109.5 L2594.6 1134.4 L2654.4 1109.5 L2716.7 1079.6 L2792.7 1026 L2830.1 1005.6 L2994.5 994.9 L2997.8 981.9 L3001.3 982.9 L2998.3 995.4 L3015.7 1001.1 L3056.8 1031 L3064.3 1068.4 L3058.1 1099.5 L3050.6 1136.9 L3033.2 1209.2 L3020.7 1278.9 L3013.2 1308.8 L3015.7 1300 L3023.2 1337.4 L3030.7 1386 L3114.8 1576.6 L2850.2 1994 L2845.2 2004 L2820.3 2013 L2833.6 2004 L2751.5 1934.2 L2743.9 1953.2 L2572.8 1816.3 L2566.1 1789.7 L2546.2 1779.1 L2519.6 1771.4 L2486.4 1777.1 L2468.1 1795.3 L2366 1799.1 L2356 1809.6 L2333.6 1816.5 L2311.1 1814.1 L2298.7 1805.8 L2256.3 1812.1 L2248.3 1813.3 L2246.8 1835.7 L2233.9 1835 L2233.9 1814.6 L2204 1816.5 L2106.8 1826.5 L2101.8 1824.5 L2085.6 1813.3 L2024.6 1770.9 L2012.1 1764.7 L2010.9 1756 L1974.3 1708.8 L1961.8 1663.9 L1949.3 1614.1 L1934.4 1580.5 L1897 1546.8 L1889.5 1541.8 L1888.3 1534.4 L1868.4 1511.9 L1859.6 1511.9 L1824.8 1511.9 L1796.1 1503.7 L1777.4 1499 L1789.9 1489.5 L1824.8 1414.8 L1868.4 1381.1 L1889.5 1351.2 L1894.5 1345 L1900 1333.9 L1907.5 1321.4 L1923.7 1299 L1919.9 1294 L1928.7 1282.8 L1924.9 1274.1 L1932.4 1254.2 L1942.4 1228 L1937.4 1226.7 L1943.6 1211.8 L1953.6 1189.4 L1951.1 1186.9 L1959.8 1159.5 L1964.8 1124.6 L1982.2 1062.3 L2003.4 1023.7 L2007.1 1000 L2003.3 1018.2 L2013.8 987 L2009.6 983.3 L1973.4 1014.4 L1923.6 1051.8 L1873.8 1059.3 L1847.6 1062.3 L1838.9 1059.3 L1833.9 1068 L1823.9 1061.8 L1821.4 1068 L1816.4 1065.5 L1799 1082.9 L1796.5 1081.7 L1761.6 1106.6 L1730.5 1096.6 L1726.7 1106.1 L1720.5 1105.4 L1719.3 1108.6 L1714.3 1107.9 L1706.8 1124.1 L1698.1 1121.6 L1694.4 1127.8 L1689.4 1126.5 L1684.9 1137.8 L1678.2 1136.5 L1670.7 1152.7 L1657 1150.2 L1652 1161.9 L1648.3 1161.4 L1639.5 1161.4 L1636.3 1171.9 L1625.3 1168.4 L1624.1 1165.2 L1629.6 1151.5 L1622.6 1147.7 L1623.3 1139 L1617.6 1136.5 L1617.1 1131.5 L1567.3 1114.1 L1549.8 1099.1 L1541.1 1082.9 L1574.8 1039.3 L1649.5 1014.4 L1670.7 1006.9 L1679.9 995.7 L1679.9 989 L1677.4 986.5 L1683.1 969.6 L1684.4 960.8 L1691.9 957.1 L1692.4 947.9 L1699.3 947.1 L1713 898.6 L1720.5 879.9 L1718.8 877.4 L1738 860.4 L1820.2 863.7 L1821.4 864.9 L1816.4 887.3 L1848.8 927.2 L1881.2 922.2 L1885 912.3 L1888.7 899.3 L1896.2 898.6 L1897.9 894.1 L1908.6 897.3 L1968.4 892.3 L2039.5 891.1 L2043.2 884.4 L2071.8 893.6 L2095.5 868.7 L2103.6 866.7 L2112.3 843 L2123.5 816.8 L2137.2 819.3 L2140.9 811.9 L2145.9 789.4 L2154.7 772 L2173.8 747.1 L2187 710.9 L2193.3 707.2 L2214.5 652.4 L2229.4 620 L2232.4 608.8 L2257.3 534.1 L2267.3 514.2 L2287.2 506.7 L2299.7 496.7 L2308.4 486.7 L2317.1 478.8 L2329.6 469.3 L2374.4 384.6Z" fill="#e15989" stroke="#232323" stroke-width="2" stroke-linejoin="round"/>
<g clip-path="url(#cpk)">
<g clip-path="url(#ra)"><rect x="1182" y="265" width="2288" height="1791" fill="url(#a1)"/><rect x="1182" y="265" width="2288" height="1791" fill="url(#a2)"/></g>
<g clip-path="url(#rb)"><rect x="1182" y="265" width="2288" height="1791" fill="url(#b1)"/><rect x="1182" y="265" width="2288" height="1791" fill="url(#b2)"/></g>
<g clip-path="url(#rc)"><rect x="1182" y="265" width="2288" height="1791" fill="url(#c1)"/><rect x="1182" y="265" width="2288" height="1791" fill="url(#c2)"/></g>
<g clip-path="url(#rd)"><rect x="1182" y="265" width="2288" height="1791" fill="url(#d1)"/><rect x="1182" y="265" width="2288" height="1791" fill="url(#d2)"/></g>
<polygon points="2071.8,893.6 2095.5,868.7 2094.9,868.7 2157.1,891.6 2112.3,1001 2056,1001" fill="#e15989"/>
<polygon points="1977.2,893.6 2039.5,891.6 2020.8,924.7 1978.4,914.8" fill="#e15989"/>
<polygon points="2062,1194.4 2106.8,1204.3 2099.3,1224.3 2059.5,1216.8" fill="#e15989"/>
<g fill="none" stroke="#232323" stroke-linejoin="round" stroke-linecap="round">
<ellipse cx="2348" cy="1749" rx="51" ry="72" transform="rotate(18 2348 1749)" stroke-width="2"/>
<ellipse cx="2347" cy="1745" rx="41" ry="61" transform="rotate(18 2347 1745)" stroke-width="2"/>
<ellipse cx="2333" cy="1743" rx="19" ry="27" transform="rotate(18 2333 1743)" stroke-width="2"/>
<path d="M2501.8 1383 L2524.2 1380.4 L2603 1363.3" stroke-width="1.7"/>
<path d="M2602 1406.7 L2603 1407" stroke-width="1.7"/>
<path d="M2602 1409.2 L2603 1409.4" stroke-width="1.7"/>
<path d="M2602 1454.5 L2603 1455.3" stroke-width="1.7"/>
<path d="M2602 1516.5 L2603 1517" stroke-width="1.7"/>
<path d="M2602 1574.6 L2603 1574.7" stroke-width="1.7"/>
<path d="M2603 1519.4 L2602 1518.8" stroke-width="1.7"/>
<path d="M2313.7 1612 L2313.1 1636.4 L2307.5 1711.1" stroke-width="1.7"/>
<path d="M2321.5 1612 L2320.6 1625.2 L2397.2 1625.2" stroke-width="1.7"/>
<path d="M2416.3 1383 L2427.1 1356.1 L2457 1337.4 L2478.9 1383" stroke-width="1.7"/>
<path d="M2475.7 1348.6 L2501.8 1380.4" stroke-width="1.7"/>
<path d="M2528 1337.4 L2513.9 1383" stroke-width="1.7"/>
<path d="M2603 1440.8 L2602 1442.3" stroke-width="1.7"/>
<path d="M2761.8 1915 L2758.8 1920.9" stroke-width="1.7"/>
<path d="M2751.6 1915 L2757.1 1919.3" stroke-width="1.7"/>
<path d="M2762.9 1915 L2758.8 1920.9" stroke-width="1.7"/>
<path d="M2778.2 1915 L2775.4 1919.3 L2777.1 1939.2 L2848.5 1994" stroke-width="1.7"/>
<path d="M2167.9 1680 L2144.2 1744.8 L2106.8 1819.5" stroke-width="1.7"/>
<path d="M2189 1680 L2149.2 1754.8 L2111.8 1820.8" stroke-width="1.7"/>
<path d="M2253.8 1680 L2231.4 1749.8 L2209 1789.6 L2204 1816.5" stroke-width="1.7"/>
<path d="M2281.2 1680 L2273.8 1704.9 L2248.8 1729.8 L2231.4 1752.3 L2221.4 1774.7 L2223.9 1789.6 L2218.9 1802.1 L2209 1802.1" stroke-width="1.7"/>
<path d="M2276.2 1738.6 L2243.9 1752.3 L2226.4 1769.7 L2241.4 1779.7 L2242.6 1789.6" stroke-width="1.7"/>
<path d="M2308.6 1744.8 L2268.8 1772.2 L2248.8 1789.6 L2246.3 1812.1" stroke-width="1.7"/>
<path d="M2303.7 1777.2 L2268.8 1797.1 L2266.3 1810.8" stroke-width="1.7"/>
<path d="M2313.6 1680 L2311.1 1704.9 L2298.7 1727.3 L2276.2 1738.6 L2298.7 1757.2 L2308.6 1779.7" stroke-width="1.7"/>
<path d="M2131.7 1732.3 L2146.7 1762.2 L2159.1 1809.6" stroke-width="1.7"/>
<path d="M2121.8 1793.4 L2141.7 1802.1 L2140.5 1815.8 L2111.8 1819.5" stroke-width="1.7"/>
<path d="M2320.6 1345 L2301.6 1383" stroke-width="1.7"/>
<path d="M2240.2 1612 L2240.4 1616.6 L2213.5 1632.8" stroke-width="1.7"/>
<path d="M2220.9 1619.1 L2148.7 1721" stroke-width="1.7"/>
<path d="M2279.8 1612 L2198.5 1721" stroke-width="1.7"/>
<path d="M2223 1612 L2161.1 1721" stroke-width="1.7"/>
<path d="M2308.1 1382.4 L2308 1383" stroke-width="1.7"/>
<path d="M2320.2 1612 L2318.1 1621.6 L2310.6 1703.8 L2298.2 1721" stroke-width="1.7"/>
<path d="M2350 1621.6 L2323.1 1624.1" stroke-width="1.7"/>
<path d="M2252.8 1383 L2263.3 1340" stroke-width="1.7"/>
<path d="M2313.7 1612 L2313.1 1614.1 L2308.1 1688.8" stroke-width="1.7"/>
<path d="M2798.9 1029.8 L2828.8 1022.3 L2873.7 1012.3 L2946 1006.1 L3003.3 1011.1 L3048.1 1099.5" stroke-width="1.7"/>
<path d="M2811.4 1022.3 L2828.8 1059.7 L2826.3 1069.6" stroke-width="1.7"/>
<path d="M2821.4 1009.8 L2838.8 1044.7" stroke-width="1.7"/>
<path d="M2818.9 1054.7 L2853.8 1046 L2911.1 1042.2 L2911.1 1049.7 L2888.6 1044.7 L2928.5 1077.1 L2911.1 1082.1" stroke-width="1.7"/>
<path d="M2944.7 1007.3 L2929.8 1057.2 L2936 1109.5 L2921 1114.5" stroke-width="1.7"/>
<path d="M2997 996.1 L2985.8 1034.8 L2993.3 1089.6 L2983.3 1092.1 L2983.3 1077.1 L2928.5 1099.5" stroke-width="1.7"/>
<path d="M3015.7 1002.4 L2990.8 1057.2 L2990.8 1099.5 L2978.3 1154.4 L2891.1 1240.3 L2840 1292" stroke-width="1.7"/>
<path d="M3025.7 1022.3 L3038.1 1054.7 L3028.2 1077.1 L3010.7 1083.3 L2993.3 1077.1" stroke-width="1.7"/>
<path d="M2923.5 1134.4 L2985.8 1102 L3058.1 1099.5" stroke-width="1.7"/>
<path d="M2926 1139.4 L2975.9 1112" stroke-width="1.7"/>
<path d="M2965.9 1109.5 L3050.6 1138.2" stroke-width="1.7"/>
<path d="M3000.8 1119.5 L3003.3 1109.5 L3015.7 1104.5 L3030.7 1114.5 L3028.2 1131.9" stroke-width="1.7"/>
<path d="M2836.3 1199.2 L2891.1 1189.2 L2898.6 1221.6 L3000.8 1209.2 L3003.3 1211.7" stroke-width="1.7"/>
<path d="M2898.6 1221.6 L2931 1230.4 L2936 1211.7 L2953.4 1205.4 L3000.8 1211.7" stroke-width="1.7"/>
<path d="M2841.3 1225.4 L2891.1 1240.3 L3020.7 1280.2" stroke-width="1.7"/>
<path d="M3013.2 1109.5 L2923.5 1249 L2902.6 1292" stroke-width="1.7"/>
<path d="M2983.3 1184.3 L2928.5 1292" stroke-width="1.7"/>
<path d="M2863.7 1194.2 L2888.6 1239.1 L2863.7 1283.9 L2862.3 1292" stroke-width="1.7"/>
<path d="M2841.3 1244.1 L2878.7 1241.6 L2845.8 1292" stroke-width="1.7"/>
<path d="M2923.5 1251.5 L2921 1271.5 L2912.2 1292" stroke-width="1.7"/>
<path d="M2926 1259 L2973.4 1276.4 L2978.3 1288.9 L2976.8 1292" stroke-width="1.7"/>
<path d="M3045.6 1159.3 L3035.7 1176.8 L3028.2 1209.2" stroke-width="1.7"/>
<path d="M2608.6 399.5 L2638.5 418.2 L2673.4 429.4 L2702.1 435.7 L2699.6 449.4 L2694.6 463.1 L2679.7 476.8" stroke-width="1.7"/>
<path d="M2611.1 403.3 L2638.5 422 L2673.4 433.2 L2698.3 438.2" stroke-width="1.7"/>
<path d="M2628.8 1601 L2546.2 1778.6" stroke-width="1.7"/>
<path d="M2637.2 1601 L2558.7 1782.8" stroke-width="1.7"/>
<path d="M2654.8 1601 L2562.9 1782.8" stroke-width="1.7"/>
<path d="M2661 1601 L2639.7 1641.5 L2631.4 1674.8 L2577.4 1782.8" stroke-width="1.7"/>
<path d="M2665.1 1601 L2648 1629.1 L2577.4 1784.9" stroke-width="1.7"/>
<path d="M2540 1765.1 L2552.5 1769.3 L2577.4 1779.7" stroke-width="1.7"/>
<path d="M2540 1778.6 L2548.3 1779.1 L2567 1790.1 L2571.2 1795.3 L2573.2 1817.1" stroke-width="1.7"/>
<path d="M2645.9 1644.7 L2657.4 1621.8 L2815.2 1692.4 L2856.8 1748.5 L2885.9 1785.9 L2895.2 1796.9 L2908.7 1789 L2909.8 1777.6 L2967.9 1691.4 L2954.4 1680 L2963.8 1667.5 L2979.3 1668.6 L2986.6 1662.3 L3006.3 1608.3" stroke-width="1.7"/>
<path d="M2652.2 1632.2 L2809 1704.9 L2850.6 1761" stroke-width="1.7"/>
<path d="M2645.9 1644.7 L2795.5 1713.2 L2849.5 1788 L2816.3 1835.8 L2764.3 1918" stroke-width="1.7"/>
<path d="M2633.5 1676.9 L2781 1742.3 L2765.4 1775.5 L2751.9 1805.7 L2731.1 1853.4 L2774.7 1890.8 L2758.1 1918" stroke-width="1.7"/>
<path d="M2614.8 1710.1 L2765.4 1775.5" stroke-width="1.7"/>
<path d="M2597.1 1745.4 L2696.8 1823.3 L2712.4 1788 L2735.3 1724.6" stroke-width="1.7"/>
<path d="M2702 1709.1 L2687.5 1741.3" stroke-width="1.7"/>
<path d="M2706.2 1750.6 L2693.7 1778.6 L2816.3 1835.8" stroke-width="1.7"/>
<path d="M2744.6 1767.2 L2732.1 1796.3" stroke-width="1.7"/>
<path d="M2764.3 1811.9 L2744.6 1864.9" stroke-width="1.7"/>
<path d="M2700.3 1601 L2771.6 1631.2 L2779.9 1613.5 L2750.1 1601" stroke-width="1.7"/>
<path d="M2747.3 1601 L2731.1 1637.4 L2724.9 1662.3 L2720.3 1678.9" stroke-width="1.7"/>
<path d="M2752.1 1601 L2822.5 1631.2" stroke-width="1.7"/>
<path d="M2777.7 1601 L3039.6 1687.2" stroke-width="1.7"/>
<path d="M2833.5 1601 L2822.5 1631.2 L2800.7 1685.2" stroke-width="1.7"/>
<path d="M2843.3 1632.2 L2829.8 1660.2 L2877.6 1692.4 L2901.4 1659.2" stroke-width="1.7"/>
<path d="M2842.2 1685.2 L2871.3 1704.9 L2877.6 1692.4" stroke-width="1.7"/>
<path d="M2874.4 1622.9 L2850.6 1675.8 L2842.2 1685.2" stroke-width="1.7"/>
<path d="M2901.4 1659.2 L2859.9 1743.3 L2844.3 1780.7" stroke-width="1.7"/>
<path d="M2913.9 1664.4 L2867.2 1754.8 L2866.1 1760" stroke-width="1.7"/>
<path d="M2924.3 1668.6 L2880.7 1766.2 L2877.6 1774.5" stroke-width="1.7"/>
<path d="M2901.4 1659.2 L2935.7 1674.8 L2937.8 1678.9 L2930.5 1691.4 L2909.8 1777.6" stroke-width="1.7"/>
<path d="M2874.4 1622.9 L2877.6 1616.6 L2885.9 1614.5 L2893.1 1622.9 L2918.1 1633.2 L2924.3 1631.2 L2934.7 1602.1" stroke-width="1.7"/>
<path d="M2930.5 1617.7 L2963.8 1631.2 L2979.3 1627 L2986.6 1608.3 L2977.5 1601" stroke-width="1.7"/>
<path d="M2901.4 1911.6 L2902.5 1890.8 L2900.4 1847.2 L2855.7 1795.3 L2774.7 1918" stroke-width="1.7"/>
<path d="M2600.2 1789 L2620 1765.1 L2661.5 1800.5 L2656.3 1815 L2644.9 1826.4 L2600.2 1789" stroke-width="1.7"/>
<path d="M2607.5 1781.8 L2651.1 1819.2" stroke-width="1.7"/>
<path d="M2614.8 1772.4 L2658.4 1807.7" stroke-width="1.7"/>
<path d="M2634.5 1776.6 L2615.8 1801.5" stroke-width="1.7"/>
<path d="M2647 1785.9 L2627.2 1810.8" stroke-width="1.7"/>
<path d="M2579.5 1804.6 L2587.8 1788.6 L2747.7 1918" stroke-width="1.7"/>
<path d="M3039.6 1639.5 L3015.7 1678.9" stroke-width="1.7"/>
<path d="M3006.3 1608.3 L3039.6 1633.2" stroke-width="1.7"/>
<path d="M2911.5 1290 L2858.6 1407.8" stroke-width="1.7"/>
<path d="M2978.6 1290 L2914.8 1426.5 L2886.2 1492.5 L2861.9 1547.5 L2824.5 1627" stroke-width="1.7"/>
<path d="M2975.3 1290 L2911.5 1426.5" stroke-width="1.7"/>
<path d="M2877.3 1290 L2864.1 1334 L2848.7 1362.6 L2820.1 1395.7 L2787.1 1424.3 L2732.1 1447.4 L2703.5 1472.7 L2685.8 1499.1 L2670.4 1521.1 L2626.4 1627" stroke-width="1.7"/>
<path d="M2864.1 1290 L2853.1 1334 L2837.7 1364.8 L2815.7 1393.5 L2784.9 1422.1 L2727.7 1451.8 L2710.1 1466.1 L2690.2 1488.1 L2657.2 1547.5 L2615.4 1627" stroke-width="1.7"/>
<path d="M2820.1 1290 L2791.5 1336.2 L2757.4 1408.9 L2732.1 1447.4" stroke-width="1.7"/>
<path d="M2806.9 1290 L2793.7 1331.8" stroke-width="1.7"/>
<path d="M2723.3 1290 L2672.6 1345 L2622 1413.3 L2602 1449.3" stroke-width="1.7"/>
<path d="M2729.9 1296.6 L2688 1334 L2628.6 1413.3 L2602 1441.9" stroke-width="1.7"/>
<path d="M2707.9 1472.7 L2709 1488.1 L2696.9 1521.1 L2693.6 1543.1 L2703.5 1558.5 L2723.3 1565.1 L2726.6 1572.9 L2720 1578.4" stroke-width="1.7"/>
<path d="M2720 1473.8 L2694.7 1532.1 L2673.7 1589.4" stroke-width="1.7"/>
<path d="M2751.9 1591.6 L2738.7 1627" stroke-width="1.7"/>
<path d="M2780.5 1613.6 L2776.1 1627" stroke-width="1.7"/>
<path d="M2683.6 1568.5 L2672.6 1589.4 L2655 1627" stroke-width="1.7"/>
<path d="M2658.3 1367 L3114 1576.2" stroke-width="1.7"/>
<path d="M2806.9 1371.4 L2812.4 1390.2 L2822.3 1394.6 L2858.6 1408.9 L2915.9 1427.6 L2930.2 1426.9 L2930.2 1441.9 L2926.9 1445.2 L2996.2 1437.5 L2997.3 1452.9 L2932.4 1454.6 L2928 1448.5 L2910.4 1439.7 L2895 1435.3" stroke-width="1.7"/>
<path d="M2688 1290 L2710.1 1312 L2740.9 1325.2 L2762.9 1327.4 L2784.9 1349.4 L2804.7 1369.2 L2812.4 1390.2" stroke-width="1.7"/>
<path d="M2751.9 1459.5 L2798.1 1472.7 L2853.1 1499.1 L2886.2 1525.5 L2930.2 1565.1 L2987.4 1607" stroke-width="1.7"/>
<path d="M2754.1 1461.7 L2787.1 1488.1 L2820.1 1501.3 L2870.7 1527.7 L2912.6 1551.9" stroke-width="1.7"/>
<path d="M2745.3 1484.8 L2842.1 1540.9 L2908.2 1571.8 L2956.6 1589.4 L2987.4 1607" stroke-width="1.7"/>
<path d="M2745.3 1485.9 L2754.1 1499.1" stroke-width="1.7"/>
<path d="M2754.1 1499.1 L2758.5 1505.7 L2806.9 1533.2 L2804.7 1527.7 L2754.1 1499.1" stroke-width="1.7"/>
<path d="M2762.9 1466.1 L2822.3 1507.9 L2819 1518.9 L2776.1 1499.1" stroke-width="1.7"/>
<path d="M2602 1494.6 L2833.3 1607 L2875.1 1627" stroke-width="1.7"/>
<path d="M2673.7 1589.4 L2776.1 1627" stroke-width="1.7"/>
<path d="M2602 1518 L2613.2 1525.5 L2672.6 1556.3 L2681.4 1565.1 L2682.5 1569.6" stroke-width="1.7"/>
<path d="M2718.9 1549.7 L2754.1 1569.6 L2798.1 1598.2 L2833.3 1607" stroke-width="1.7"/>
<path d="M2843.2 1588.3 L2935.7 1602.6 L2929.1 1627" stroke-width="1.7"/>
<path d="M2867.4 1555.2 L2872.9 1574 L2985.2 1607 L2980.8 1627" stroke-width="1.7"/>
<path d="M3005 1290 L3002.8 1312 L2994 1329.6 L2997.3 1342.8 L2996.2 1439.7 L3007.2 1477.1 L3024.8 1527.7 L3029.2 1540.9 L3030.3 1558.5 L3022.6 1560.7 L3018.2 1580.6 L3007.2 1598.2 L3005 1613.6 L2996.2 1627" stroke-width="1.7"/>
<path d="M2996.2 1439.7 L3040.2 1415.5" stroke-width="1.7"/>
<path d="M3009.4 1439.7 L3042.4 1536.5 L3055.6 1602.6 L3046.8 1627" stroke-width="1.7"/>
<path d="M3042.4 1537.6 L3060 1532.1 L3077.7 1496.9" stroke-width="1.7"/>
<path d="M2855.3 1415.5 L2846.5 1426.5 L2820.1 1417.7 L2811.3 1422.1 L2784.9 1452.9 L2771.7 1463.9" stroke-width="1.7"/>
<path d="M2855.3 1415.5 L2860.8 1419.9 L2861.9 1433.1 L2869.6 1434.2 L2850.9 1481.5" stroke-width="1.7"/>
<path d="M2875.1 1415.5 L2899.4 1424.3 L2892.8 1454 L2898.3 1457.3 L2895 1472.7" stroke-width="1.7"/>
<path d="M2817.9 1448.9 L2884 1481.5 L2886.2 1488.1 L2879.6 1495.8 L2812.4 1466.1 L2811.3 1460.6 L2817.9 1448.9" stroke-width="1.7"/>
<path d="M2835.5 1448.5 L2826.7 1470.5" stroke-width="1.7"/>
<path d="M2872.9 1430.9 L2869.6 1434.2" stroke-width="1.7"/>
<path d="M2895 1472.7 L2908.2 1457.3 L2917 1452.9 L2963.2 1458.4 L2966.5 1460.6 L2956.6 1483.7 L2934.6 1474.9 L2928 1487" stroke-width="1.7"/>
<path d="M2961 1439.7 L2962.1 1454" stroke-width="1.7"/>
<path d="M2886.2 1492.5 L2886.2 1510.1 L2890.6 1521.1 L2899.4 1528.8" stroke-width="1.7"/>
<path d="M2602 1453.9 L2608.8 1457.3 L2609.9 1463.9 L2622 1474.9 L2661.6 1487 L2684.7 1466.1 L2684.7 1459.5 L2661.6 1448.5 L2602 1425.1" stroke-width="1.7"/>
<path d="M2602 1574.5 L2608.8 1576.2 L2626.4 1585 L2630.8 1593.8 L2600 1627" stroke-width="1.7"/>
<path d="M2646.2 1543.1 L2626.4 1585" stroke-width="1.7"/>
<path d="M2602 1403 L2622 1410 L2703.5 1441.9 L2751.9 1459.5" stroke-width="1.7"/>
<path d="M2602 1414.1 L2644 1430.9 L2701.3 1441.9" stroke-width="1.7"/>
<path d="M2635.2 1382.4 L2657.2 1378 L2668.2 1371.4 L2672.6 1345" stroke-width="1.7"/>
<path d="M2194.6 1469 L2240.4 1448.9 L2308 1421.4 L2410.4 1394 L2564.1 1369.3" stroke-width="1.7"/>
<path d="M2194.6 1472.6 L2289.7 1439.7 L2362.9 1416 L2472.6 1386.7 L2580.5 1373.9 L2620 1384.9" stroke-width="1.7"/>
<path d="M2297 1432.4 L2362.9 1419.6 L2490.9 1397.7 L2564.1 1398.6 L2620 1410.5" stroke-width="1.7"/>
<path d="M2355.6 1424.2 L2408.6 1433.3 L2527.5 1426 L2582.3 1428.8 L2620 1437.9" stroke-width="1.7"/>
<path d="M2306.2 1390.4 L2304.4 1403.2 L2315.3 1439.7 L2333.6 1476.3 L2337.3 1501.9" stroke-width="1.7"/>
<path d="M2308 1416 L2326.3 1410.5 L2408.6 1406.8 L2490.9 1394" stroke-width="1.7"/>
<path d="M2298.9 1481.8 L2381.2 1460.8 L2472.6 1459.8 L2545.8 1474.5 L2620 1512.9" stroke-width="1.7"/>
<path d="M2378.4 1456.2 L2454.3 1448.9 L2527.5 1447 L2571.4 1459.8 L2589.7 1446.1 L2607.9 1454.4 L2609.8 1461.7 L2620 1469" stroke-width="1.7"/>
<path d="M2458 1448.9 L2459.8 1439.7 L2464.4 1433.3" stroke-width="1.7"/>
<path d="M2211.1 1507.4 L2300.7 1505.6 L2381.2 1498.3 L2454.3 1501.9 L2518.3 1499.2 L2573.2 1480 L2600.6 1448.9 L2620 1416" stroke-width="1.7"/>
<path d="M2337.3 1542.1 L2344.6 1512.9 L2381.2 1502.8 L2415.9 1504.7 L2479.9 1512 L2527.5 1505.6 L2571.4 1509.2 L2591.5 1516.5 L2620 1531.2" stroke-width="1.7"/>
<path d="M2395.8 1514.7 L2401.3 1507.4 L2415.9 1505.6" stroke-width="1.7"/>
<path d="M2448.8 1511.1 L2448.8 1562.3" stroke-width="1.7"/>
<path d="M2443.4 1526.6 L2443.4 1573.2" stroke-width="1.7"/>
<path d="M2448.8 1547.6 L2479.9 1550.4 L2479.9 1563.2 L2443.4 1562.3" stroke-width="1.7"/>
<path d="M2448.8 1555.9 L2479.9 1557.7" stroke-width="1.7"/>
<path d="M2488.2 1576 L2489.1 1547.6 L2511 1548.5 L2511.9 1565.9 L2516.5 1577.8" stroke-width="1.7"/>
<path d="M2542.1 1579.6 L2544.9 1551.3 L2555.8 1551.7 L2554.5 1580.5" stroke-width="1.7"/>
<path d="M2340.9 1553.1 L2353.7 1551.3 L2381.2 1567.7 L2443.4 1573.2 L2565.9 1582 L2573.2 1570.5 L2600.6 1573.2 L2620 1584.2" stroke-width="1.7"/>
<path d="M2315.3 1610 L2314.4 1582.4 L2326.3 1562.3 L2340.9 1553.1 L2381.2 1536.7 L2394 1518.4 L2397.6 1511.1" stroke-width="1.7"/>
<path d="M2276.9 1469 L2298.9 1478.1 L2297 1503.7 L2317.2 1522 L2326.3 1533 L2340.9 1553.1 L2342.8 1562.3 L2340 1566.8" stroke-width="3.4"/>
<path d="M2304.4 1472.6 L2344.6 1450.7 L2362.9 1440.6 L2377.5 1454.4 L2366.5 1456.2 L2368.4 1462.6" stroke-width="2.21"/>
<path d="M2340.9 1350.1 L2306.2 1390.4 L2253.2 1503.7 L2225.7 1560.4" stroke-width="1.7"/>
<path d="M2333.6 1384.9 L2289.7 1432.4 L2267.8 1476.3 L2266 1536.7" stroke-width="1.7"/>
<path d="M2315.3 1447 L2264.1 1536.7 L2229.4 1600.7" stroke-width="1.7"/>
<path d="M2240.4 1448.9 L2211.1 1507.4" stroke-width="1.7"/>
<path d="M2234.9 1448.9 L2297 1476.3 L2326.3 1538.5" stroke-width="1.7"/>
<path d="M2196.5 1481.8 L2253.2 1472.6 L2297 1469" stroke-width="1.7"/>
<path d="M2212.9 1501.9 L2275.1 1505.6 L2326.3 1538.5" stroke-width="1.7"/>
<path d="M2229.4 1597 L2289.7 1593.4 L2282.4 1610" stroke-width="1.7"/>
<path d="M2289.7 1593.4 L2308 1549.5 L2331.8 1527.5 L2362.9 1505.6" stroke-width="1.7"/>
<path d="M2293.4 1578.7 L2308 1556.8 L2297 1610" stroke-width="1.7"/>
<path d="M2620 1512.9 L2571.4 1510.1 L2533 1505.6" stroke-width="1.7"/>
</g></g>
<g stroke-linejoin="round">
<path d="M2302.2 563.5 L2307.6 575.2 L2295.9 600.9 L2281 595.1 L2292.2 567.7Z" fill="#232323" stroke="#232323" stroke-width="112"/><path d="M2302.2 563.5 L2307.6 575.2 L2295.9 600.9 L2281 595.1 L2292.2 567.7Z" fill="#987db7" stroke="#987db7" stroke-width="108"/>
<path d="M2312.1 572.7 L2315.1 573.5 L2317.1 578.9 L2314.1 579.4Z" fill="#232323" stroke="#232323" stroke-width="112"/><path d="M2312.1 572.7 L2315.1 573.5 L2317.1 578.9 L2314.1 579.4Z" fill="#987db7" stroke="#987db7" stroke-width="108"/>
<path d="M2573.8 524.6 L2578.7 529.1 L2583.2 525.4 L2586.2 528.6 L2578.7 537.1 L2568.8 530.4Z" fill="#232323" stroke="#232323" stroke-width="112"/><path d="M2573.8 524.6 L2578.7 529.1 L2583.2 525.4 L2586.2 528.6 L2578.7 537.1 L2568.8 530.4Z" fill="#987db7" stroke="#987db7" stroke-width="108"/>
<path d="M2526.4 528.6 L2536.4 539.1 L2524.7 533.6Z" fill="#232323" stroke="#232323" stroke-width="112"/><path d="M2526.4 528.6 L2536.4 539.1 L2524.7 533.6Z" fill="#987db7" stroke="#987db7" stroke-width="108"/>
<path d="M2324.1 608.3 L2327.1 611.8 L2324.1 612.6Z" fill="#232323" stroke="#232323" stroke-width="112"/><path d="M2324.1 608.3 L2327.1 611.8 L2324.1 612.6Z" fill="#987db7" stroke="#987db7" stroke-width="108"/>
<path d="M2306.6 683 L2324.1 687.8 L2311.6 703.5 L2304.2 701 L2304.7 694.8 L2302.2 693.5Z" fill="#232323" stroke="#232323" stroke-width="112"/><path d="M2306.6 683 L2324.1 687.8 L2311.6 703.5 L2304.2 701 L2304.7 694.8 L2302.2 693.5Z" fill="#987db7" stroke="#987db7" stroke-width="108"/>
<path d="M2283.7 770.7 L2284.2 786.9 L2278 784.5Z" fill="#232323" stroke="#232323" stroke-width="112"/><path d="M2283.7 770.7 L2284.2 786.9 L2278 784.5Z" fill="#987db7" stroke="#987db7" stroke-width="108"/>
<path d="M2285.5 795.7 L2288.7 805.6 L2286.2 815.6 L2279.7 809.4Z" fill="#232323" stroke="#232323" stroke-width="112"/><path d="M2285.5 795.7 L2288.7 805.6 L2286.2 815.6 L2279.7 809.4Z" fill="#987db7" stroke="#987db7" stroke-width="108"/>
<path d="M2290.5 810.6 L2292.2 814.4 L2289.7 814.4Z" fill="#232323" stroke="#232323" stroke-width="112"/><path d="M2290.5 810.6 L2292.2 814.4 L2289.7 814.4Z" fill="#987db7" stroke="#987db7" stroke-width="108"/>
<path d="M2359 844.3 L2361.5 845.5 L2359 856.7 L2354.5 855.5Z" fill="#232323" stroke="#232323" stroke-width="112"/><path d="M2359 844.3 L2361.5 845.5 L2359 856.7 L2354.5 855.5Z" fill="#987db7" stroke="#987db7" stroke-width="108"/>
<path d="M2283 886.1 L2291.7 891.6 L2287.2 899.6 L2278.7 895.3Z" fill="#232323" stroke="#232323" stroke-width="112"/><path d="M2283 886.1 L2291.7 891.6 L2287.2 899.6 L2278.7 895.3Z" fill="#987db7" stroke="#987db7" stroke-width="108"/>
<path d="M2205.7 912.8 L2216.2 916 L2212.5 922Z" fill="#232323" stroke="#232323" stroke-width="112"/><path d="M2205.7 912.8 L2216.2 916 L2212.5 922Z" fill="#987db7" stroke="#987db7" stroke-width="108"/>
<path d="M2207 794.9 L2208.5 794.9 L2208.5 796.7 L2207 796.7Z" fill="#232323" stroke="#232323" stroke-width="112"/><path d="M2207 794.9 L2208.5 794.9 L2208.5 796.7 L2207 796.7Z" fill="#987db7" stroke="#987db7" stroke-width="108"/>
<path d="M2486.5 679.1 L2489.8 680.3 L2487.3 686 L2484.3 684.8Z" fill="#232323" stroke="#232323" stroke-width="112"/><path d="M2486.5 679.1 L2489.8 680.3 L2487.3 686 L2484.3 684.8Z" fill="#987db7" stroke="#987db7" stroke-width="108"/>
<path d="M2446.9 673.6 L2447.4 683.5 L2443.7 682.3Z" fill="#232323" stroke="#232323" stroke-width="112"/><path d="M2446.9 673.6 L2447.4 683.5 L2443.7 682.3Z" fill="#987db7" stroke="#987db7" stroke-width="108"/>
<path d="M2451.2 918.3 L2453.7 919 L2454.9 926.5 L2448.7 924.5Z" fill="#232323" stroke="#232323" stroke-width="112"/><path d="M2451.2 918.3 L2453.7 919 L2454.9 926.5 L2448.7 924.5Z" fill="#987db7" stroke="#987db7" stroke-width="108"/>
<path d="M2420.5 951.9 L2423 953.4 L2421.3 956.9 L2418.8 955.1Z" fill="#232323" stroke="#232323" stroke-width="112"/><path d="M2420.5 951.9 L2423 953.4 L2421.3 956.9 L2418.8 955.1Z" fill="#987db7" stroke="#987db7" stroke-width="108"/>
<path d="M2382.6 968.3 L2389.4 971.8 L2388.9 973.1 L2383.1 969.6Z" fill="#232323" stroke="#232323" stroke-width="112"/><path d="M2382.6 968.3 L2389.4 971.8 L2388.9 973.1 L2383.1 969.6Z" fill="#987db7" stroke="#987db7" stroke-width="108"/>
<path d="M2460.6 962.6 L2466.6 990 L2449.9 985.8Z" fill="#232323" stroke="#232323" stroke-width="112"/><path d="M2460.6 962.6 L2466.6 990 L2449.9 985.8Z" fill="#987db7" stroke="#987db7" stroke-width="108"/>
<path d="M2491 975.8 L2492.5 981.8 L2489 981.8Z" fill="#232323" stroke="#232323" stroke-width="112"/><path d="M2491 975.8 L2492.5 981.8 L2489 981.8Z" fill="#987db7" stroke="#987db7" stroke-width="108"/>
<path d="M1600.4 1017.4 L1609.1 1023.9 L1607.1 1033.1 L1628.3 1041.3 L1620.8 1064.3 L1609.6 1061.8 L1588.5 1054.8 L1573 1035.6 L1577.2 1032.4 L1579.7 1034.9Z" fill="#232323" stroke="#232323" stroke-width="112"/><path d="M1600.4 1017.4 L1609.1 1023.9 L1607.1 1033.1 L1628.3 1041.3 L1620.8 1064.3 L1609.6 1061.8 L1588.5 1054.8 L1573 1035.6 L1577.2 1032.4 L1579.7 1034.9Z" fill="#987db7" stroke="#987db7" stroke-width="108"/>
<path d="M1816.4 939.2 L1828.9 942.7 L1830.7 949.1 L1825.2 957.6 L1816.4 955.1 L1818.4 945.9 L1815.2 942.2Z" fill="#232323" stroke="#232323" stroke-width="112"/><path d="M1816.4 939.2 L1828.9 942.7 L1830.7 949.1 L1825.2 957.6 L1816.4 955.1 L1818.4 945.9 L1815.2 942.2Z" fill="#987db7" stroke="#987db7" stroke-width="108"/>
<path d="M1850.1 1000.7 L1859.3 1003.2 L1856.8 1007.4 L1850.1 1004.5Z" fill="#232323" stroke="#232323" stroke-width="112"/><path d="M1850.1 1000.7 L1859.3 1003.2 L1856.8 1007.4 L1850.1 1004.5Z" fill="#987db7" stroke="#987db7" stroke-width="108"/>
<path d="M1919.9 956.6 L1946 955.9 L1952.2 959.1 L1954.7 967.1 L1952.2 975.8 L1931.1 1011.9 L1926.1 1013.2 L1918.6 1026.9 L1916.1 1026.4 L1919.9 1019.9 L1900.7 1016.9Z" fill="#232323" stroke="#232323" stroke-width="112"/><path d="M1919.9 956.6 L1946 955.9 L1952.2 959.1 L1954.7 967.1 L1952.2 975.8 L1931.1 1011.9 L1926.1 1013.2 L1918.6 1026.9 L1916.1 1026.4 L1919.9 1019.9 L1900.7 1016.9Z" fill="#987db7" stroke="#987db7" stroke-width="108"/>
<path d="M2023.3 1075.5 L2061.1 1087.2 L2046.9 1141.5 L2008.3 1129Z" fill="#232323" stroke="#232323" stroke-width="112"/><path d="M2023.3 1075.5 L2061.1 1087.2 L2046.9 1141.5 L2008.3 1129Z" fill="#987db7" stroke="#987db7" stroke-width="108"/>
<path d="M2102.3 1028.2 L2106.8 1029.9 L2106.3 1031.6 L2101.8 1029.9Z" fill="#232323" stroke="#232323" stroke-width="112"/><path d="M2102.3 1028.2 L2106.8 1029.9 L2106.3 1031.6 L2101.8 1029.9Z" fill="#987db7" stroke="#987db7" stroke-width="108"/>
<path d="M2270.5 1002.5 L2272.5 1003 L2271.8 1007.5 L2270 1006.7Z" fill="#232323" stroke="#232323" stroke-width="112"/><path d="M2270.5 1002.5 L2272.5 1003 L2271.8 1007.5 L2270 1006.7Z" fill="#987db7" stroke="#987db7" stroke-width="108"/>
<path d="M2319.9 1032.4 L2327.3 1034.9 L2320.6 1057.8 L2311.1 1054.8Z" fill="#232323" stroke="#232323" stroke-width="112"/><path d="M2319.9 1032.4 L2327.3 1034.9 L2320.6 1057.8 L2311.1 1054.8Z" fill="#987db7" stroke="#987db7" stroke-width="108"/>
<path d="M2473.1 1023.7 L2474.3 1012.5 L2475.6 1021.9 L2477.6 1022.4 L2483.6 1031.1 L2455.2 1062.8Z" fill="#232323" stroke="#232323" stroke-width="112"/><path d="M2473.1 1023.7 L2474.3 1012.5 L2475.6 1021.9 L2477.6 1022.4 L2483.6 1031.1 L2455.2 1062.8Z" fill="#987db7" stroke="#987db7" stroke-width="108"/>
<path d="M2356.5 1072.3 L2366 1075.5 L2354 1080.2Z" fill="#232323" stroke="#232323" stroke-width="112"/><path d="M2356.5 1072.3 L2366 1075.5 L2354 1080.2Z" fill="#987db7" stroke="#987db7" stroke-width="108"/>
<path d="M2283.7 1102.2 L2292.4 1100.2 L2291.2 1104.7 L2286.7 1120.3 L2278.7 1118.4Z" fill="#232323" stroke="#232323" stroke-width="112"/><path d="M2283.7 1102.2 L2292.4 1100.2 L2291.2 1104.7 L2286.7 1120.3 L2278.7 1118.4Z" fill="#987db7" stroke="#987db7" stroke-width="108"/>
<path d="M2188 1123.1 L2190.3 1123.1 L2190.3 1124.6 L2188 1124.6Z" fill="#232323" stroke="#232323" stroke-width="112"/><path d="M2188 1123.1 L2190.3 1123.1 L2190.3 1124.6 L2188 1124.6Z" fill="#987db7" stroke="#987db7" stroke-width="108"/>
<path d="M2282.5 1138.3 L2291.7 1140.8 L2287 1158.2 L2277.5 1155Z" fill="#232323" stroke="#232323" stroke-width="112"/><path d="M2282.5 1138.3 L2291.7 1140.8 L2287 1158.2 L2277.5 1155Z" fill="#987db7" stroke="#987db7" stroke-width="108"/>
<path d="M2278.7 1178.2 L2286.2 1179.9 L2283.7 1189.4 L2276.2 1187.4Z" fill="#232323" stroke="#232323" stroke-width="112"/><path d="M2278.7 1178.2 L2286.2 1179.9 L2283.7 1189.4 L2276.2 1187.4Z" fill="#987db7" stroke="#987db7" stroke-width="108"/>
<path d="M2425.8 1147.5 L2428.2 1148.8 L2424 1158.7 L2422 1157.5Z" fill="#232323" stroke="#232323" stroke-width="112"/><path d="M2425.8 1147.5 L2428.2 1148.8 L2424 1158.7 L2422 1157.5Z" fill="#987db7" stroke="#987db7" stroke-width="108"/>
<path d="M2408.3 1142.8 L2412 1144 L2410.8 1147 L2407.8 1145.8Z" fill="#232323" stroke="#232323" stroke-width="112"/><path d="M2408.3 1142.8 L2412 1144 L2410.8 1147 L2407.8 1145.8Z" fill="#987db7" stroke="#987db7" stroke-width="108"/>
<path d="M2177.8 1182.6 L2202.7 1189.9 L2204.5 1196.8 L2199 1213.8 L2171.6 1204.8Z" fill="#232323" stroke="#232323" stroke-width="112"/><path d="M2177.8 1182.6 L2202.7 1189.9 L2204.5 1196.8 L2199 1213.8 L2171.6 1204.8Z" fill="#987db7" stroke="#987db7" stroke-width="108"/>
<path d="M2154.4 1200.3 L2156.4 1200.3 L2156.4 1202.1 L2154.4 1202.1Z" fill="#232323" stroke="#232323" stroke-width="112"/><path d="M2154.4 1200.3 L2156.4 1200.3 L2156.4 1202.1 L2154.4 1202.1Z" fill="#987db7" stroke="#987db7" stroke-width="108"/>
<path d="M2271.3 1207.3 L2276.7 1208.8 L2266.8 1240.5 L2262.5 1239.2Z" fill="#232323" stroke="#232323" stroke-width="112"/><path d="M2271.3 1207.3 L2276.7 1208.8 L2266.8 1240.5 L2262.5 1239.2Z" fill="#987db7" stroke="#987db7" stroke-width="108"/>
<path d="M2241.9 1232.2 L2256.3 1238 L2250.1 1261.6 L2242.6 1260.4 L2239.4 1272.8 L2229.4 1271.1Z" fill="#232323" stroke="#232323" stroke-width="112"/><path d="M2241.9 1232.2 L2256.3 1238 L2250.1 1261.6 L2242.6 1260.4 L2239.4 1272.8 L2229.4 1271.1Z" fill="#987db7" stroke="#987db7" stroke-width="108"/>
<path d="M2379.7 1220.5 L2369.7 1244.9 L2349.8 1236.2Z" fill="#232323" stroke="#232323" stroke-width="112"/><path d="M2379.7 1220.5 L2369.7 1244.9 L2349.8 1236.2Z" fill="#987db7" stroke="#987db7" stroke-width="108"/>
<path d="M2344.8 1226 L2354.7 1226.7 L2343.5 1233Z" fill="#232323" stroke="#232323" stroke-width="112"/><path d="M2344.8 1226 L2354.7 1226.7 L2343.5 1233Z" fill="#987db7" stroke="#987db7" stroke-width="108"/>
<path d="M2306.1 1251.2 L2309.9 1254.7 L2304.9 1257.9Z" fill="#232323" stroke="#232323" stroke-width="112"/><path d="M2306.1 1251.2 L2309.9 1254.7 L2304.9 1257.9Z" fill="#987db7" stroke="#987db7" stroke-width="108"/>
<path d="M2336.1 1272.3 L2334.8 1279.6 L2328.1 1277.1Z" fill="#232323" stroke="#232323" stroke-width="112"/><path d="M2336.1 1272.3 L2334.8 1279.6 L2328.1 1277.1Z" fill="#987db7" stroke="#987db7" stroke-width="108"/>
<path d="M2369.7 1286.5 L2378.4 1291.5 L2370.9 1302.7Z" fill="#232323" stroke="#232323" stroke-width="112"/><path d="M2369.7 1286.5 L2378.4 1291.5 L2370.9 1302.7Z" fill="#987db7" stroke="#987db7" stroke-width="108"/>
<path d="M2147.9 1259.9 L2152.4 1261.1 L2151.2 1266.1 L2146.2 1264.9Z" fill="#232323" stroke="#232323" stroke-width="112"/><path d="M2147.9 1259.9 L2152.4 1261.1 L2151.2 1266.1 L2146.2 1264.9Z" fill="#987db7" stroke="#987db7" stroke-width="108"/>
<path d="M2197.8 1299 L2199.5 1299 L2199.5 1300.8 L2197.8 1300.8Z" fill="#232323" stroke="#232323" stroke-width="112"/><path d="M2197.8 1299 L2199.5 1299 L2199.5 1300.8 L2197.8 1300.8Z" fill="#987db7" stroke="#987db7" stroke-width="108"/>
<path d="M2222.7 1313.5 L2228.9 1314.7 L2227.7 1318.9 L2221.4 1317.7Z" fill="#232323" stroke="#232323" stroke-width="112"/><path d="M2222.7 1313.5 L2228.9 1314.7 L2227.7 1318.9 L2221.4 1317.7Z" fill="#987db7" stroke="#987db7" stroke-width="108"/>
<path d="M1982.7 1295.3 L1984.7 1295.8 L1983.7 1299 L1982.2 1298.5Z" fill="#232323" stroke="#232323" stroke-width="112"/><path d="M1982.7 1295.3 L1984.7 1295.8 L1983.7 1299 L1982.2 1298.5Z" fill="#987db7" stroke="#987db7" stroke-width="108"/>
<path d="M1982.2 1332.1 L1990.9 1335.1 L1988.5 1337.6 L1983.5 1335.1Z" fill="#232323" stroke="#232323" stroke-width="112"/><path d="M1982.2 1332.1 L1990.9 1335.1 L1988.5 1337.6 L1983.5 1335.1Z" fill="#987db7" stroke="#987db7" stroke-width="108"/>
<path d="M2083.1 1310.2 L2089.4 1312 L2085.6 1326.4 L2089.4 1327.7 L2088.1 1332.6 L2084.4 1331.9 L2079.9 1348.3 L2073.2 1346.8 L2077.4 1330.9 L2079.9 1321.4 L2075.7 1320.2 L2076.4 1318.4 L2080.6 1319.4Z" fill="#232323" stroke="#232323" stroke-width="112"/><path d="M2083.1 1310.2 L2089.4 1312 L2085.6 1326.4 L2089.4 1327.7 L2088.1 1332.6 L2084.4 1331.9 L2079.9 1348.3 L2073.2 1346.8 L2077.4 1330.9 L2079.9 1321.4 L2075.7 1320.2 L2076.4 1318.4 L2080.6 1319.4Z" fill="#987db7" stroke="#987db7" stroke-width="108"/>
<path d="M2008.9 1357.6 L2013.9 1359.3 L2012.1 1363.3 L2007.1 1361.3Z" fill="#232323" stroke="#232323" stroke-width="112"/><path d="M2008.9 1357.6 L2013.9 1359.3 L2012.1 1363.3 L2007.1 1361.3Z" fill="#987db7" stroke="#987db7" stroke-width="108"/>
<path d="M2145.4 1362.5 L2148.7 1363.8 L2147.4 1366.3 L2144.7 1365.3Z" fill="#232323" stroke="#232323" stroke-width="112"/><path d="M2145.4 1362.5 L2148.7 1363.8 L2147.4 1366.3 L2144.7 1365.3Z" fill="#987db7" stroke="#987db7" stroke-width="108"/>
<path d="M2142.9 1371.3 L2146.7 1372.5 L2143.7 1380 L2140.5 1378.7Z" fill="#232323" stroke="#232323" stroke-width="112"/><path d="M2142.9 1371.3 L2146.7 1372.5 L2143.7 1380 L2140.5 1378.7Z" fill="#987db7" stroke="#987db7" stroke-width="108"/>
<path d="M2160.9 1315.7 L2162.6 1315.7 L2162.6 1317.4 L2160.9 1317.4Z" fill="#232323" stroke="#232323" stroke-width="112"/><path d="M2160.9 1315.7 L2162.6 1315.7 L2162.6 1317.4 L2160.9 1317.4Z" fill="#987db7" stroke="#987db7" stroke-width="108"/>
<path d="M2490.7 975.4 L2493 982.4 L2488.7 982.4Z" fill="#232323" stroke="#232323" stroke-width="112"/><path d="M2490.7 975.4 L2493 982.4 L2488.7 982.4Z" fill="#987db7" stroke="#987db7" stroke-width="108"/>
<path d="M2480 1026 L2483.7 1029.8 L2481.2 1034.8 L2477.5 1032.3Z" fill="#232323" stroke="#232323" stroke-width="112"/><path d="M2480 1026 L2483.7 1029.8 L2481.2 1034.8 L2477.5 1032.3Z" fill="#987db7" stroke="#987db7" stroke-width="108"/>
<path d="M2535.3 1117 L2540.3 1122.5 L2532.3 1119.5Z" fill="#232323" stroke="#232323" stroke-width="112"/><path d="M2535.3 1117 L2540.3 1122.5 L2532.3 1119.5Z" fill="#987db7" stroke="#987db7" stroke-width="108"/>
<path d="M2526.1 1126.2 L2530.6 1133.9 L2521.1 1130.7Z" fill="#232323" stroke="#232323" stroke-width="112"/><path d="M2526.1 1126.2 L2530.6 1133.9 L2521.1 1130.7Z" fill="#987db7" stroke="#987db7" stroke-width="108"/>
<path d="M2646.4 1129.9 L2686.3 1129.4 L2686.3 1135.2 L2645.7 1135.7Z" fill="#232323" stroke="#232323" stroke-width="112"/><path d="M2646.4 1129.9 L2686.3 1129.4 L2686.3 1135.2 L2645.7 1135.7Z" fill="#987db7" stroke="#987db7" stroke-width="108"/>
<path d="M2645.7 1138.2 L2684.3 1138.2 L2678.8 1160.1 L2642 1150.6Z" fill="#232323" stroke="#232323" stroke-width="112"/><path d="M2645.7 1138.2 L2684.3 1138.2 L2678.8 1160.1 L2642 1150.6Z" fill="#987db7" stroke="#987db7" stroke-width="108"/>
<path d="M2853.8 1116.5 L2866.7 1115.7 L2868.2 1140.6 L2856.7 1141.1Z" fill="#232323" stroke="#232323" stroke-width="112"/><path d="M2853.8 1116.5 L2866.7 1115.7 L2868.2 1140.6 L2856.7 1141.1Z" fill="#987db7" stroke="#987db7" stroke-width="108"/>
<path d="M2740.4 1201.2 L2782.7 1215.4 L2787.7 1227.4 L2769 1241.1Z" fill="#232323" stroke="#232323" stroke-width="112"/><path d="M2740.4 1201.2 L2782.7 1215.4 L2787.7 1227.4 L2769 1241.1Z" fill="#987db7" stroke="#987db7" stroke-width="108"/>
<path d="M2766.5 1074.6 L2775.3 1095.8 L2776 1110.7 L2762.8 1111.2 L2762.8 1118.7 L2744.1 1120.2 L2728.7 1125 L2726.7 1119.5 L2744.1 1109.5 L2754.1 1098.3Z" fill="#232323" stroke="#232323" stroke-width="112"/><path d="M2766.5 1074.6 L2775.3 1095.8 L2776 1110.7 L2762.8 1111.2 L2762.8 1118.7 L2744.1 1120.2 L2728.7 1125 L2726.7 1119.5 L2744.1 1109.5 L2754.1 1098.3Z" fill="#987db7" stroke="#987db7" stroke-width="108"/>
<path d="M2570.2 1234.6 L2586.6 1241.1 L2570.2 1285.2 L2553.5 1278.9Z" fill="#232323" stroke="#232323" stroke-width="112"/><path d="M2570.2 1234.6 L2586.6 1241.1 L2570.2 1285.2 L2553.5 1278.9Z" fill="#987db7" stroke="#987db7" stroke-width="108"/>
<path d="M2602.6 1315.1 L2611.6 1311.8 L2612.6 1314.3 L2606.6 1317.6Z" fill="#232323" stroke="#232323" stroke-width="112"/><path d="M2602.6 1315.1 L2611.6 1311.8 L2612.6 1314.3 L2606.6 1317.6Z" fill="#987db7" stroke="#987db7" stroke-width="108"/>
<path d="M2601.3 1327.5 L2614.6 1323.8 L2620 1326.8 L2609.6 1331.3Z" fill="#232323" stroke="#232323" stroke-width="112"/><path d="M2601.3 1327.5 L2614.6 1323.8 L2620 1326.8 L2609.6 1331.3Z" fill="#987db7" stroke="#987db7" stroke-width="108"/>
<path d="M1892.5 1432.2 L1899.5 1437.2 L1893.3 1444.7 L1885.8 1455.9 L1874.6 1447.1 L1882.1 1436.7 L1888.3 1438.4Z" fill="#232323" stroke="#232323" stroke-width="112"/><path d="M1892.5 1432.2 L1899.5 1437.2 L1893.3 1444.7 L1885.8 1455.9 L1874.6 1447.1 L1882.1 1436.7 L1888.3 1438.4Z" fill="#987db7" stroke="#987db7" stroke-width="108"/>
<path d="M1836 1459.1 L1837.7 1460.8 L1834.7 1464.6 L1833 1462.6Z" fill="#232323" stroke="#232323" stroke-width="112"/><path d="M1836 1459.1 L1837.7 1460.8 L1834.7 1464.6 L1833 1462.6Z" fill="#987db7" stroke="#987db7" stroke-width="108"/>
<path d="M2007.9 1357.4 L2013.4 1359.4 L2011.6 1363.2 L2006.6 1361.2Z" fill="#232323" stroke="#232323" stroke-width="112"/><path d="M2007.9 1357.4 L2013.4 1359.4 L2011.6 1363.2 L2006.6 1361.2Z" fill="#987db7" stroke="#987db7" stroke-width="108"/>
<path d="M2142.4 1371.6 L2145.7 1372.9 L2143.2 1379.9 L2140.7 1378.6Z" fill="#232323" stroke="#232323" stroke-width="112"/><path d="M2142.4 1371.6 L2145.7 1372.9 L2143.2 1379.9 L2140.7 1378.6Z" fill="#987db7" stroke="#987db7" stroke-width="108"/>
<path d="M2145.7 1363.2 L2147.9 1363.7 L2147.4 1365.7 L2145.2 1365.2Z" fill="#232323" stroke="#232323" stroke-width="112"/><path d="M2145.7 1363.2 L2147.9 1363.7 L2147.4 1365.7 L2145.2 1365.2Z" fill="#987db7" stroke="#987db7" stroke-width="108"/>
<path d="M2220.2 1373.6 L2222.2 1374.9 L2211 1398.6Z" fill="#232323" stroke="#232323" stroke-width="112"/><path d="M2220.2 1373.6 L2222.2 1374.9 L2211 1398.6Z" fill="#987db7" stroke="#987db7" stroke-width="108"/>
<path d="M2075.2 1335 L2081.4 1336.3 L2078.4 1347.5 L2073.9 1346.2Z" fill="#232323" stroke="#232323" stroke-width="112"/><path d="M2075.2 1335 L2081.4 1336.3 L2078.4 1347.5 L2073.9 1346.2Z" fill="#987db7" stroke="#987db7" stroke-width="108"/>
<path d="M2002.9 1589.9 L2006.1 1589.9 L2005.6 1592.2 L2002.9 1592.4Z" fill="#232323" stroke="#232323" stroke-width="112"/><path d="M2002.9 1589.9 L2006.1 1589.9 L2005.6 1592.2 L2002.9 1592.4Z" fill="#987db7" stroke="#987db7" stroke-width="108"/>
<path d="M2078.2 1752.3 L2081.4 1752.3 L2078.2 1759.7Z" fill="#232323" stroke="#232323" stroke-width="112"/><path d="M2078.2 1752.3 L2081.4 1752.3 L2078.2 1759.7Z" fill="#987db7" stroke="#987db7" stroke-width="108"/>
<path d="M2142.4 1490 L2146.2 1500.7 L2137.5 1506.4 L2137.5 1510.7 L2073.9 1559.3 L1990.5 1626.5 L1981.7 1629 L1976.7 1616.1 L1999.2 1599.1 L2011.6 1592.9 L2059 1541.8 L2098.8 1513.2 L2111.3 1498.2 L2123.8 1494.5Z" fill="#232323" stroke="#232323" stroke-width="112"/><path d="M2142.4 1490 L2146.2 1500.7 L2137.5 1506.4 L2137.5 1510.7 L2073.9 1559.3 L1990.5 1626.5 L1981.7 1629 L1976.7 1616.1 L1999.2 1599.1 L2011.6 1592.9 L2059 1541.8 L2098.8 1513.2 L2111.3 1498.2 L2123.8 1494.5Z" fill="#987db7" stroke="#987db7" stroke-width="108"/>
<path d="M2153.7 1517.4 L2168.6 1554.3 L2176.1 1581.7 L2163.6 1609.1 L2131.2 1639 L2076.4 1716.2 L2029.1 1698.8 L2016.6 1698.8 L2000.4 1701.3 L1983.7 1641.5 L2004.2 1626.5 L2073.9 1569.2 L2123.8 1531.9Z" fill="#232323" stroke="#232323" stroke-width="112"/><path d="M2153.7 1517.4 L2168.6 1554.3 L2176.1 1581.7 L2163.6 1609.1 L2131.2 1639 L2076.4 1716.2 L2029.1 1698.8 L2016.6 1698.8 L2000.4 1701.3 L1983.7 1641.5 L2004.2 1626.5 L2073.9 1569.2 L2123.8 1531.9Z" fill="#987db7" stroke="#987db7" stroke-width="108"/>
<path d="M2441.2 308.6 L2451.7 322.3 L2461.6 333.5 L2467.1 340.2 L2454.2 334.8 L2449.2 346 L2439.2 369.6 L2428 395.8 L2404.3 403.3 L2411.8 379.6 L2413.8 364.7 L2406.8 346 L2411.3 334.8 L2424.3 326 L2434.2 317.3Z" fill="#232323" stroke="#232323" stroke-width="112"/><path d="M2441.2 308.6 L2451.7 322.3 L2461.6 333.5 L2467.1 340.2 L2454.2 334.8 L2449.2 346 L2439.2 369.6 L2428 395.8 L2404.3 403.3 L2411.8 379.6 L2413.8 364.7 L2406.8 346 L2411.3 334.8 L2424.3 326 L2434.2 317.3Z" fill="#987db7" stroke="#987db7" stroke-width="108"/>
<path d="M2463.6 327.8 L2479.1 329.8 L2494 332.3 L2507.7 331.5 L2514.5 337.2 L2521.4 346 L2533.9 353.4 L2548.8 362.7 L2555.1 367.1 L2555.8 370.4 L2543.9 363.4 L2528.9 355.9 L2516.4 352.2 L2514.5 347.2 L2509 343.5 L2497.8 339.7 L2495.3 343.5 L2489 338.5 L2479.1 336.7 L2470.4 334.8Z" fill="#232323" stroke="#232323" stroke-width="112"/><path d="M2463.6 327.8 L2479.1 329.8 L2494 332.3 L2507.7 331.5 L2514.5 337.2 L2521.4 346 L2533.9 353.4 L2548.8 362.7 L2555.1 367.1 L2555.8 370.4 L2543.9 363.4 L2528.9 355.9 L2516.4 352.2 L2514.5 347.2 L2509 343.5 L2497.8 339.7 L2495.3 343.5 L2489 338.5 L2479.1 336.7 L2470.4 334.8Z" fill="#987db7" stroke="#987db7" stroke-width="108"/>
<path d="M2428 395.8 L2425.5 404.5 L2418 423.2 L2416.8 426.9 L2429.2 436.9 L2426.2 443.1 L2434.2 452.4 L2431.2 462.3 L2403.1 454.4 L2409.3 439.4 L2408.8 422.5 L2411.3 422 L2415.5 412 L2420.5 399.5Z" fill="#232323" stroke="#232323" stroke-width="112"/><path d="M2428 395.8 L2425.5 404.5 L2418 423.2 L2416.8 426.9 L2429.2 436.9 L2426.2 443.1 L2434.2 452.4 L2431.2 462.3 L2403.1 454.4 L2409.3 439.4 L2408.8 422.5 L2411.3 422 L2415.5 412 L2420.5 399.5Z" fill="#987db7" stroke="#987db7" stroke-width="108"/>
<path d="M2401.3 458.1 L2431.7 468.1 L2428 484.3 L2431.7 490.5 L2430.5 499.2 L2441.7 505.4 L2370.2 686.8 L2350.3 648.7 L2374.4 608.8 L2379.4 591.4 L2378.2 574 L2371.9 554 L2367.4 536.6 L2368.2 524.1 L2374.4 509.2 L2389.4 484.3Z" fill="#232323" stroke="#232323" stroke-width="112"/><path d="M2401.3 458.1 L2431.7 468.1 L2428 484.3 L2431.7 490.5 L2430.5 499.2 L2441.7 505.4 L2370.2 686.8 L2350.3 648.7 L2374.4 608.8 L2379.4 591.4 L2378.2 574 L2371.9 554 L2367.4 536.6 L2368.2 524.1 L2374.4 509.2 L2389.4 484.3Z" fill="#987db7" stroke="#987db7" stroke-width="108"/>
<path d="M2347.8 653.6 L2368.4 692.8 L2339 767 L2331.6 762 L2314.1 756.5 L2293.7 750.8 L2299.2 732.1 L2309.1 714.7 L2317.9 699.7 L2324.1 693.5 L2334.1 679.8Z" fill="#232323" stroke="#232323" stroke-width="112"/><path d="M2347.8 653.6 L2368.4 692.8 L2339 767 L2331.6 762 L2314.1 756.5 L2293.7 750.8 L2299.2 732.1 L2309.1 714.7 L2317.9 699.7 L2324.1 693.5 L2334.1 679.8Z" fill="#987db7" stroke="#987db7" stroke-width="108"/>
<path d="M2292.2 755.8 L2314.1 760.8 L2331.6 767 L2339 770.7 L2349 777.5 L2341.5 799.4 L2337.8 806.9 L2345.3 811.4 L2344 814.4 L2363.5 821.8 L2341.5 877.9 L2301.2 861.7 L2305.4 851.7 L2302.9 831.8 L2296.7 814.4 L2290.5 794.4 L2288.7 774.5Z" fill="#232323" stroke="#232323" stroke-width="112"/><path d="M2292.2 755.8 L2314.1 760.8 L2331.6 767 L2339 770.7 L2349 777.5 L2341.5 799.4 L2337.8 806.9 L2345.3 811.4 L2344 814.4 L2363.5 821.8 L2341.5 877.9 L2301.2 861.7 L2305.4 851.7 L2302.9 831.8 L2296.7 814.4 L2290.5 794.4 L2288.7 774.5Z" fill="#987db7" stroke="#987db7" stroke-width="108"/>
</g>
<g fill="#e5b636" stroke="#232323" stroke-width="1.6" stroke-linejoin="round">
<path d="M2302.2 563.5 L2307.6 575.2 L2295.9 600.9 L2281 595.1 L2292.2 567.7Z"/>
<path d="M2312.1 572.7 L2315.1 573.5 L2317.1 578.9 L2314.1 579.4Z"/>
<path d="M2573.8 524.6 L2578.7 529.1 L2583.2 525.4 L2586.2 528.6 L2578.7 537.1 L2568.8 530.4Z"/>
<path d="M2526.4 528.6 L2536.4 539.1 L2524.7 533.6Z"/>
<path d="M2324.1 608.3 L2327.1 611.8 L2324.1 612.6Z"/>
<path d="M2306.6 683 L2324.1 687.8 L2311.6 703.5 L2304.2 701 L2304.7 694.8 L2302.2 693.5Z"/>
<path d="M2283.7 770.7 L2284.2 786.9 L2278 784.5Z"/>
<path d="M2285.5 795.7 L2288.7 805.6 L2286.2 815.6 L2279.7 809.4Z"/>
<path d="M2290.5 810.6 L2292.2 814.4 L2289.7 814.4Z"/>
<path d="M2359 844.3 L2361.5 845.5 L2359 856.7 L2354.5 855.5Z"/>
<path d="M2283 886.1 L2291.7 891.6 L2287.2 899.6 L2278.7 895.3Z"/>
<path d="M2205.7 912.8 L2216.2 916 L2212.5 922Z"/>
<path d="M2207 794.9 L2208.5 794.9 L2208.5 796.7 L2207 796.7Z"/>
<path d="M2486.5 679.1 L2489.8 680.3 L2487.3 686 L2484.3 684.8Z"/>
<path d="M2446.9 673.6 L2447.4 683.5 L2443.7 682.3Z"/>
<path d="M2451.2 918.3 L2453.7 919 L2454.9 926.5 L2448.7 924.5Z"/>
<path d="M2420.5 951.9 L2423 953.4 L2421.3 956.9 L2418.8 955.1Z"/>
<path d="M2382.6 968.3 L2389.4 971.8 L2388.9 973.1 L2383.1 969.6Z"/>
<path d="M2460.6 962.6 L2466.6 990 L2449.9 985.8Z"/>
<path d="M2491 975.8 L2492.5 981.8 L2489 981.8Z"/>
<path d="M1600.4 1017.4 L1609.1 1023.9 L1607.1 1033.1 L1628.3 1041.3 L1620.8 1064.3 L1609.6 1061.8 L1588.5 1054.8 L1573 1035.6 L1577.2 1032.4 L1579.7 1034.9Z"/>
<path d="M1816.4 939.2 L1828.9 942.7 L1830.7 949.1 L1825.2 957.6 L1816.4 955.1 L1818.4 945.9 L1815.2 942.2Z"/>
<path d="M1850.1 1000.7 L1859.3 1003.2 L1856.8 1007.4 L1850.1 1004.5Z"/>
<path d="M1919.9 956.6 L1946 955.9 L1952.2 959.1 L1954.7 967.1 L1952.2 975.8 L1931.1 1011.9 L1926.1 1013.2 L1918.6 1026.9 L1916.1 1026.4 L1919.9 1019.9 L1900.7 1016.9Z"/>
<path d="M2023.3 1075.5 L2061.1 1087.2 L2046.9 1141.5 L2008.3 1129Z"/>
<path d="M2102.3 1028.2 L2106.8 1029.9 L2106.3 1031.6 L2101.8 1029.9Z"/>
<path d="M2270.5 1002.5 L2272.5 1003 L2271.8 1007.5 L2270 1006.7Z"/>
<path d="M2319.9 1032.4 L2327.3 1034.9 L2320.6 1057.8 L2311.1 1054.8Z"/>
<path d="M2473.1 1023.7 L2474.3 1012.5 L2475.6 1021.9 L2477.6 1022.4 L2483.6 1031.1 L2455.2 1062.8Z"/>
<path d="M2356.5 1072.3 L2366 1075.5 L2354 1080.2Z"/>
<path d="M2283.7 1102.2 L2292.4 1100.2 L2291.2 1104.7 L2286.7 1120.3 L2278.7 1118.4Z"/>
<path d="M2188 1123.1 L2190.3 1123.1 L2190.3 1124.6 L2188 1124.6Z"/>
<path d="M2282.5 1138.3 L2291.7 1140.8 L2287 1158.2 L2277.5 1155Z"/>
<path d="M2278.7 1178.2 L2286.2 1179.9 L2283.7 1189.4 L2276.2 1187.4Z"/>
<path d="M2425.8 1147.5 L2428.2 1148.8 L2424 1158.7 L2422 1157.5Z"/>
<path d="M2408.3 1142.8 L2412 1144 L2410.8 1147 L2407.8 1145.8Z"/>
<path d="M2177.8 1182.6 L2202.7 1189.9 L2204.5 1196.8 L2199 1213.8 L2171.6 1204.8Z"/>
<path d="M2154.4 1200.3 L2156.4 1200.3 L2156.4 1202.1 L2154.4 1202.1Z"/>
<path d="M2271.3 1207.3 L2276.7 1208.8 L2266.8 1240.5 L2262.5 1239.2Z"/>
<path d="M2241.9 1232.2 L2256.3 1238 L2250.1 1261.6 L2242.6 1260.4 L2239.4 1272.8 L2229.4 1271.1Z"/>
<path d="M2379.7 1220.5 L2369.7 1244.9 L2349.8 1236.2Z"/>
<path d="M2344.8 1226 L2354.7 1226.7 L2343.5 1233Z"/>
<path d="M2306.1 1251.2 L2309.9 1254.7 L2304.9 1257.9Z"/>
<path d="M2336.1 1272.3 L2334.8 1279.6 L2328.1 1277.1Z"/>
<path d="M2369.7 1286.5 L2378.4 1291.5 L2370.9 1302.7Z"/>
<path d="M2147.9 1259.9 L2152.4 1261.1 L2151.2 1266.1 L2146.2 1264.9Z"/>
<path d="M2197.8 1299 L2199.5 1299 L2199.5 1300.8 L2197.8 1300.8Z"/>
<path d="M2222.7 1313.5 L2228.9 1314.7 L2227.7 1318.9 L2221.4 1317.7Z"/>
<path d="M1982.7 1295.3 L1984.7 1295.8 L1983.7 1299 L1982.2 1298.5Z"/>
<path d="M1982.2 1332.1 L1990.9 1335.1 L1988.5 1337.6 L1983.5 1335.1Z"/>
<path d="M2083.1 1310.2 L2089.4 1312 L2085.6 1326.4 L2089.4 1327.7 L2088.1 1332.6 L2084.4 1331.9 L2079.9 1348.3 L2073.2 1346.8 L2077.4 1330.9 L2079.9 1321.4 L2075.7 1320.2 L2076.4 1318.4 L2080.6 1319.4Z"/>
<path d="M2008.9 1357.6 L2013.9 1359.3 L2012.1 1363.3 L2007.1 1361.3Z"/>
<path d="M2145.4 1362.5 L2148.7 1363.8 L2147.4 1366.3 L2144.7 1365.3Z"/>
<path d="M2142.9 1371.3 L2146.7 1372.5 L2143.7 1380 L2140.5 1378.7Z"/>
<path d="M2160.9 1315.7 L2162.6 1315.7 L2162.6 1317.4 L2160.9 1317.4Z"/>
<path d="M2490.7 975.4 L2493 982.4 L2488.7 982.4Z"/>
<path d="M2480 1026 L2483.7 1029.8 L2481.2 1034.8 L2477.5 1032.3Z"/>
<path d="M2535.3 1117 L2540.3 1122.5 L2532.3 1119.5Z"/>
<path d="M2526.1 1126.2 L2530.6 1133.9 L2521.1 1130.7Z"/>
<path d="M2646.4 1129.9 L2686.3 1129.4 L2686.3 1135.2 L2645.7 1135.7Z"/>
<path d="M2645.7 1138.2 L2684.3 1138.2 L2678.8 1160.1 L2642 1150.6Z"/>
<path d="M2853.8 1116.5 L2866.7 1115.7 L2868.2 1140.6 L2856.7 1141.1Z"/>
<path d="M2740.4 1201.2 L2782.7 1215.4 L2787.7 1227.4 L2769 1241.1Z"/>
<path d="M2766.5 1074.6 L2775.3 1095.8 L2776 1110.7 L2762.8 1111.2 L2762.8 1118.7 L2744.1 1120.2 L2728.7 1125 L2726.7 1119.5 L2744.1 1109.5 L2754.1 1098.3Z"/>
<path d="M2570.2 1234.6 L2586.6 1241.1 L2570.2 1285.2 L2553.5 1278.9Z"/>
<path d="M2602.6 1315.1 L2611.6 1311.8 L2612.6 1314.3 L2606.6 1317.6Z"/>
<path d="M2601.3 1327.5 L2614.6 1323.8 L2620 1326.8 L2609.6 1331.3Z"/>
<path d="M1892.5 1432.2 L1899.5 1437.2 L1893.3 1444.7 L1885.8 1455.9 L1874.6 1447.1 L1882.1 1436.7 L1888.3 1438.4Z"/>
<path d="M1836 1459.1 L1837.7 1460.8 L1834.7 1464.6 L1833 1462.6Z"/>
<path d="M2007.9 1357.4 L2013.4 1359.4 L2011.6 1363.2 L2006.6 1361.2Z"/>
<path d="M2142.4 1371.6 L2145.7 1372.9 L2143.2 1379.9 L2140.7 1378.6Z"/>
<path d="M2145.7 1363.2 L2147.9 1363.7 L2147.4 1365.7 L2145.2 1365.2Z"/>
<path d="M2220.2 1373.6 L2222.2 1374.9 L2211 1398.6Z"/>
<path d="M2075.2 1335 L2081.4 1336.3 L2078.4 1347.5 L2073.9 1346.2Z"/>
<path d="M2002.9 1589.9 L2006.1 1589.9 L2005.6 1592.2 L2002.9 1592.4Z"/>
<path d="M2078.2 1752.3 L2081.4 1752.3 L2078.2 1759.7Z"/>
<path d="M2142.4 1490 L2146.2 1500.7 L2137.5 1506.4 L2137.5 1510.7 L2073.9 1559.3 L1990.5 1626.5 L1981.7 1629 L1976.7 1616.1 L1999.2 1599.1 L2011.6 1592.9 L2059 1541.8 L2098.8 1513.2 L2111.3 1498.2 L2123.8 1494.5Z"/>
<path d="M2153.7 1517.4 L2168.6 1554.3 L2176.1 1581.7 L2163.6 1609.1 L2131.2 1639 L2076.4 1716.2 L2029.1 1698.8 L2016.6 1698.8 L2000.4 1701.3 L1983.7 1641.5 L2004.2 1626.5 L2073.9 1569.2 L2123.8 1531.9Z"/>
<path d="M2441.2 308.6 L2451.7 322.3 L2461.6 333.5 L2467.1 340.2 L2454.2 334.8 L2449.2 346 L2439.2 369.6 L2428 395.8 L2404.3 403.3 L2411.8 379.6 L2413.8 364.7 L2406.8 346 L2411.3 334.8 L2424.3 326 L2434.2 317.3Z"/>
<path d="M2463.6 327.8 L2479.1 329.8 L2494 332.3 L2507.7 331.5 L2514.5 337.2 L2521.4 346 L2533.9 353.4 L2548.8 362.7 L2555.1 367.1 L2555.8 370.4 L2543.9 363.4 L2528.9 355.9 L2516.4 352.2 L2514.5 347.2 L2509 343.5 L2497.8 339.7 L2495.3 343.5 L2489 338.5 L2479.1 336.7 L2470.4 334.8Z"/>
<path d="M2428 395.8 L2425.5 404.5 L2418 423.2 L2416.8 426.9 L2429.2 436.9 L2426.2 443.1 L2434.2 452.4 L2431.2 462.3 L2403.1 454.4 L2409.3 439.4 L2408.8 422.5 L2411.3 422 L2415.5 412 L2420.5 399.5Z"/>
<path d="M2401.3 458.1 L2431.7 468.1 L2428 484.3 L2431.7 490.5 L2430.5 499.2 L2441.7 505.4 L2370.2 686.8 L2350.3 648.7 L2374.4 608.8 L2379.4 591.4 L2378.2 574 L2371.9 554 L2367.4 536.6 L2368.2 524.1 L2374.4 509.2 L2389.4 484.3Z"/>
<path d="M2347.8 653.6 L2368.4 692.8 L2339 767 L2331.6 762 L2314.1 756.5 L2293.7 750.8 L2299.2 732.1 L2309.1 714.7 L2317.9 699.7 L2324.1 693.5 L2334.1 679.8Z"/>
<path d="M2292.2 755.8 L2314.1 760.8 L2331.6 767 L2339 770.7 L2349 777.5 L2341.5 799.4 L2337.8 806.9 L2345.3 811.4 L2344 814.4 L2363.5 821.8 L2341.5 877.9 L2301.2 861.7 L2305.4 851.7 L2302.9 831.8 L2296.7 814.4 L2290.5 794.4 L2288.7 774.5Z"/>
<path d="M2416.8 461.3 L2462.9 480.5" stroke="#232323" stroke-width="3.2" fill="none"/><path d="M2416.8 461.3 L2462.9 480.5" stroke="#e5b636" stroke-width="1.2" stroke-dasharray="5 3" fill="none"/>
<circle cx="2456.1" cy="377.9" r="5"/>
<circle cx="2506" cy="446.9" r="5"/>
<circle cx="2542.9" cy="489.7" r="5"/>
<circle cx="2523.2" cy="507.4" r="5"/>
<circle cx="2519.7" cy="514.2" r="5"/>
<circle cx="2565.8" cy="537.8" r="5"/>
<circle cx="2322.6" cy="572.7" r="5"/>
<circle cx="2329.1" cy="576.9" r="5"/>
<circle cx="2272" cy="596.9" r="5"/>
<circle cx="2313.9" cy="613.1" r="5"/>
<circle cx="2436.7" cy="645.7" r="5"/>
<circle cx="2492.5" cy="694.8" r="5"/>
<circle cx="2392.6" cy="714.7" r="5"/>
<circle cx="2454.2" cy="719.7" r="5"/>
<circle cx="2265.8" cy="729.6" r="5"/>
<circle cx="2463.9" cy="751.6" r="5"/>
<circle cx="2442.7" cy="782" r="5"/>
<circle cx="2479.1" cy="784.5" r="5"/>
<circle cx="2353" cy="784.7" r="5"/>
<circle cx="2403.8" cy="798.9" r="5"/>
<circle cx="2190.8" cy="816.8" r="5"/>
<circle cx="2263.8" cy="833.8" r="5"/>
<circle cx="2436.7" cy="850.7" r="5"/>
<circle cx="2181.8" cy="863.7" r="5"/>
<circle cx="2374.7" cy="873.7" r="5"/>
<circle cx="2243.9" cy="875.6" r="5"/>
<circle cx="2260.8" cy="884.6" r="5"/>
<circle cx="2170.8" cy="921.7" r="5"/>
<circle cx="2342" cy="926.5" r="5"/>
<circle cx="2274.5" cy="932.5" r="5"/>
<circle cx="2261.8" cy="958.9" r="5"/>
<circle cx="2265.8" cy="981.8" r="5"/>
<circle cx="2431.7" cy="993.8" r="5"/>
<circle cx="2462.9" cy="993" r="5"/>
<circle cx="2477.1" cy="997" r="5"/>
<circle cx="2461.1" cy="1001" r="5"/>
<circle cx="2141.7" cy="992.8" r="5"/>
<circle cx="2119.8" cy="996.2" r="5"/>
<circle cx="2174.6" cy="997.5" r="5"/>
<circle cx="2078.7" cy="1000" r="5"/>
<circle cx="1732" cy="943.4" r="5"/>
<circle cx="1746.9" cy="957.6" r="5"/>
<circle cx="1721.8" cy="993.7" r="5"/>
<circle cx="1612.6" cy="1069.7" r="5"/>
<circle cx="1688.6" cy="1068.7" r="5"/>
<circle cx="1708.8" cy="1086.2" r="5"/>
<circle cx="1840.1" cy="972.8" r="5"/>
<circle cx="1937.3" cy="950.4" r="5"/>
<circle cx="1968.7" cy="981.8" r="5"/>
<circle cx="2078.8" cy="1002" r="5"/>
<circle cx="2079.8" cy="1023.9" r="5"/>
<circle cx="2007.8" cy="1112.8" r="5"/>
<circle cx="2008.6" cy="1134.8" r="5"/>
<circle cx="2094.5" cy="1107.1" r="5"/>
<circle cx="2078.9" cy="1002.5" r="5"/>
<circle cx="2079.9" cy="1023.7" r="5"/>
<circle cx="2129" cy="1018.7" r="5"/>
<circle cx="2123.5" cy="1049.8" r="5"/>
<circle cx="2194" cy="1051.8" r="5"/>
<circle cx="2240.1" cy="1062.8" r="5"/>
<circle cx="2242.6" cy="1087.7" r="5"/>
<circle cx="2136.7" cy="1086.5" r="5"/>
<circle cx="2129.2" cy="1092.2" r="5"/>
<circle cx="2167.9" cy="1088.5" r="5"/>
<circle cx="2180.3" cy="1100.9" r="5"/>
<circle cx="2176.6" cy="1107.6" r="5"/>
<circle cx="2094.9" cy="1106.6" r="5"/>
<circle cx="2223.7" cy="1136.8" r="5"/>
<circle cx="2283.7" cy="1032.6" r="5"/>
<circle cx="2351" cy="1041.6" r="5"/>
<circle cx="2323.6" cy="1098.7" r="5"/>
<circle cx="2349.8" cy="1094.7" r="5"/>
<circle cx="2354" cy="1104.7" r="5"/>
<circle cx="2345.5" cy="1114.6" r="5"/>
<circle cx="2405.1" cy="1110.1" r="5"/>
<circle cx="2409.6" cy="1118.9" r="5"/>
<circle cx="2349.8" cy="1135.8" r="5"/>
<circle cx="2378.4" cy="1141.5" r="5"/>
<circle cx="2405.8" cy="1149" r="5"/>
<circle cx="2471.8" cy="1165.7" r="5"/>
<circle cx="2461.9" cy="1003" r="5"/>
<circle cx="2476.8" cy="1001.2" r="5"/>
<circle cx="2169.6" cy="1157.7" r="5"/>
<circle cx="2203" cy="1179.4" r="5"/>
<circle cx="2211.7" cy="1192.9" r="5"/>
<circle cx="2174.8" cy="1213" r="5"/>
<circle cx="2279.2" cy="1172.4" r="5"/>
<circle cx="2287" cy="1175.7" r="5"/>
<circle cx="2306.6" cy="1175.9" r="5"/>
<circle cx="2392.6" cy="1203.8" r="5"/>
<circle cx="2356" cy="1212.8" r="5"/>
<circle cx="2262.5" cy="1242.4" r="5"/>
<circle cx="2262.5" cy="1258.9" r="5"/>
<circle cx="2346.8" cy="1257.4" r="5"/>
<circle cx="2114.8" cy="1241.7" r="5"/>
<circle cx="1981" cy="1234.7" r="5"/>
<circle cx="2231.6" cy="1281.1" r="5"/>
<circle cx="2352.7" cy="1289.8" r="5"/>
<circle cx="2450.9" cy="1270.8" r="5"/>
<circle cx="2464.4" cy="1235.7" r="5"/>
<circle cx="2488.8" cy="1242.4" r="5"/>
<circle cx="2055.7" cy="1294" r="5"/>
<circle cx="1999.7" cy="1309" r="5"/>
<circle cx="1984.7" cy="1350.8" r="5"/>
<circle cx="2217.9" cy="1345.1" r="5"/>
<circle cx="2133.5" cy="1368.8" r="5"/>
<circle cx="1924.9" cy="1366.3" r="5"/>
<circle cx="2537.8" cy="1182.3" r="5"/>
<circle cx="2706.7" cy="1166.8" r="5"/>
<circle cx="2800.7" cy="1163.8" r="5"/>
<circle cx="2633.7" cy="1216.6" r="5"/>
<circle cx="2488.7" cy="1242.8" r="5"/>
<circle cx="2583.9" cy="1265.7" r="5"/>
<circle cx="2585.6" cy="1280.9" r="5"/>
<circle cx="2623.8" cy="1276.9" r="5"/>
<circle cx="1984.7" cy="1350.7" r="5"/>
<circle cx="1924.7" cy="1365.9" r="5"/>
<circle cx="2217.7" cy="1345" r="5"/>
<circle cx="2133.7" cy="1368.9" r="5"/>
<circle cx="1902.7" cy="1444.7" r="5"/>
<circle cx="1938.6" cy="1442.9" r="5"/>
<circle cx="1948.6" cy="1438.9" r="5"/>
<circle cx="1946.8" cy="1442.9" r="5"/>
<circle cx="1881.6" cy="1483.8" r="5"/>
<circle cx="1892.8" cy="1489.5" r="5"/>
<circle cx="1904.5" cy="1499.5" r="5"/>
<circle cx="2064" cy="1455.9" r="5"/>
<circle cx="2088.1" cy="1447.6" r="5"/>
<circle cx="2089.6" cy="1462.8" r="5"/>
</g></svg>
<div class="box" style="left:121px;top:2065px;width:433px;height:46px"></div>
<svg class="ic" style="left:136px;top:2076px" width="26" height="26" viewBox="0 0 26 26"><circle cx="10.500" cy="10.500" r="7" fill="none" stroke="#8a8a8a" stroke-width="2.200"/><path d="M15.500 15.500l7 7" stroke="#8a8a8a" stroke-width="2.600" stroke-linecap="round"/></svg>
<div class="t" style="left:179.7px;top:2072.9px;font-size:26px;line-height:31.2px;letter-spacing:0.76px;color:#7f7f7f;font-family:&quot;Liberation Sans&quot;,&quot;DejaVu Sans&quot;,sans-serif;">Type to locate (⌘K)</div>
<div class="t" style="left:1748.6px;top:2074.1px;font-size:24px;line-height:28.8px;letter-spacing:-0.34px;color:#000;">Coordinate</div>
<div class="box" style="left:1871px;top:2067px;width:204px;height:43px"></div>
<div class="t" style="left:1891px;top:2074.1px;font-size:24px;line-height:28.8px;letter-spacing:-0.53px;color:#000;">554127,695881</div>
<svg class="ic" style="left:2082px;top:2070px" width="38" height="38" viewBox="0 0 38 38"><g transform="rotate(-28 17 20)"><rect x="9" y="8" width="16" height="25" rx="8" fill="#fff" stroke="#111" stroke-width="2.200"/><path d="M9 19h16M17 8v11" stroke="#111" stroke-width="2"/><ellipse cx="13" cy="13.500" rx="2.500" ry="4" fill="#111"/><circle cx="17" cy="26" r="3" fill="#fff" stroke="#111" stroke-width="1.600"/></g><path d="M26 10l7-6" stroke="#333" stroke-width="1.600" stroke-dasharray="2 2"/></svg>
<div class="t" style="left:2143px;top:2074.1px;font-size:24px;line-height:28.8px;letter-spacing:-1.01px;color:#000;">Scale</div>
<div class="box" style="left:2206px;top:2065px;width:187px;height:46px;background:linear-gradient(#fff,#f1f1f1)"></div><div class="abs" style="left:2209px;top:2068px;width:143px;height:40px;background:#fff;border-right:2px solid #c4c4c4"></div>
<div class="t" style="left:2215px;top:2074.1px;font-size:24px;line-height:28.8px;letter-spacing:-0.39px;color:#000;">1:84372</div>
<div class="arr" style="left:2363px;top:2085.5px;border-top-color:#444"></div>
<svg class="ic" style="left:2415px;top:2070px" width="30" height="36" viewBox="0 0 30 36"><path d="M8 17v-6a7 7 0 0 1 14 0v6" fill="none" stroke="#a0a0a0" stroke-width="3"/><rect x="3" y="16" width="24" height="17" rx="3" fill="#6e6e6e"/></svg>
<div class="t" style="left:2461.7px;top:2074.1px;font-size:24px;line-height:28.8px;letter-spacing:-0.30px;color:#000;">Magnifier</div>
<div class="box" style="left:2567px;top:2067px;width:190px;height:44px"></div><div class="abs" style="left:2727px;top:2070px;width:2px;height:38px;background:#c8c8c8"></div><svg class="ic" style="left:2731px;top:2074px" width="20" height="30" viewBox="0 0 20 30"><path d="M10 2l7 9H3zM10 28l7-9H3z" fill="#444"/></svg>
<div class="t" style="left:2576px;top:2074.1px;font-size:24px;line-height:28.8px;letter-spacing:-1.10px;color:#000;">100%</div>
<div class="t" style="left:2777px;top:2074.1px;font-size:24px;line-height:28.8px;letter-spacing:-0.49px;color:#000;">Rotation</div>
<div class="box" style="left:2882px;top:2067px;width:183px;height:44px"></div><div class="abs" style="left:3035px;top:2070px;width:2px;height:38px;background:#c8c8c8"></div><svg class="ic" style="left:3039px;top:2074px" width="20" height="30" viewBox="0 0 20 30"><path d="M10 2l7 9H3zM10 28l7-9H3z" fill="#444"/></svg>
<div class="t" style="left:2893px;top:2074.1px;font-size:24px;line-height:28.8px;letter-spacing:-0.33px;color:#000;">0.0 °</div>
<div class="abs" style="left:3078px;top:2075px;width:27px;height:27px;background:#fff;border:2px solid #bdbdbd;box-sizing:border-box;border-radius:2px"></div><svg class="ic" style="left:3078px;top:2075px" width="27" height="27" viewBox="0 0 28 28"><path d="M7 14.500l4.500 6L20 6.500" fill="none" stroke="#111" stroke-width="3.200"/></svg>
<div class="t" style="left:3117px;top:2074.1px;font-size:24px;line-height:28.8px;letter-spacing:-0.95px;color:#000;">Render</div>
<svg class="ic" style="left:3221px;top:2072px" width="34" height="32" viewBox="0 0 34 32"><g fill="none" stroke="#8a8a8a" stroke-width="1.800"><path d="M2 12L10 3h14l8 9z" fill="#e4e4e4"/><circle cx="17" cy="17" r="12"/><path d="M5 17h24M17 5v24M8 9c5 3 13 3 18 0M8 25c5-3 13-3 18 0M17 5c-7 6-7 18 0 24M17 5c7 6 7 18 0 24"/></g></svg>
<div class="t" style="left:3258.5px;top:2074.1px;font-size:24px;line-height:28.8px;letter-spacing:-0.97px;color:#000;">EPSG:3424</div>
<svg class="ic" style="left:3425px;top:2071px" width="34" height="34" viewBox="0 0 34 34"><path d="M17 3c9 0 15.500 5 15.500 12S26 27 21.500 27c1 2.500 4 4.500 7.500 5.500-6 .5-9.500-1.500-12-5.500C8 27 1.500 22 1.500 15S8 3 17 3z" fill="#6a6a6a"/></svg>
</div></div></div></body></html>
